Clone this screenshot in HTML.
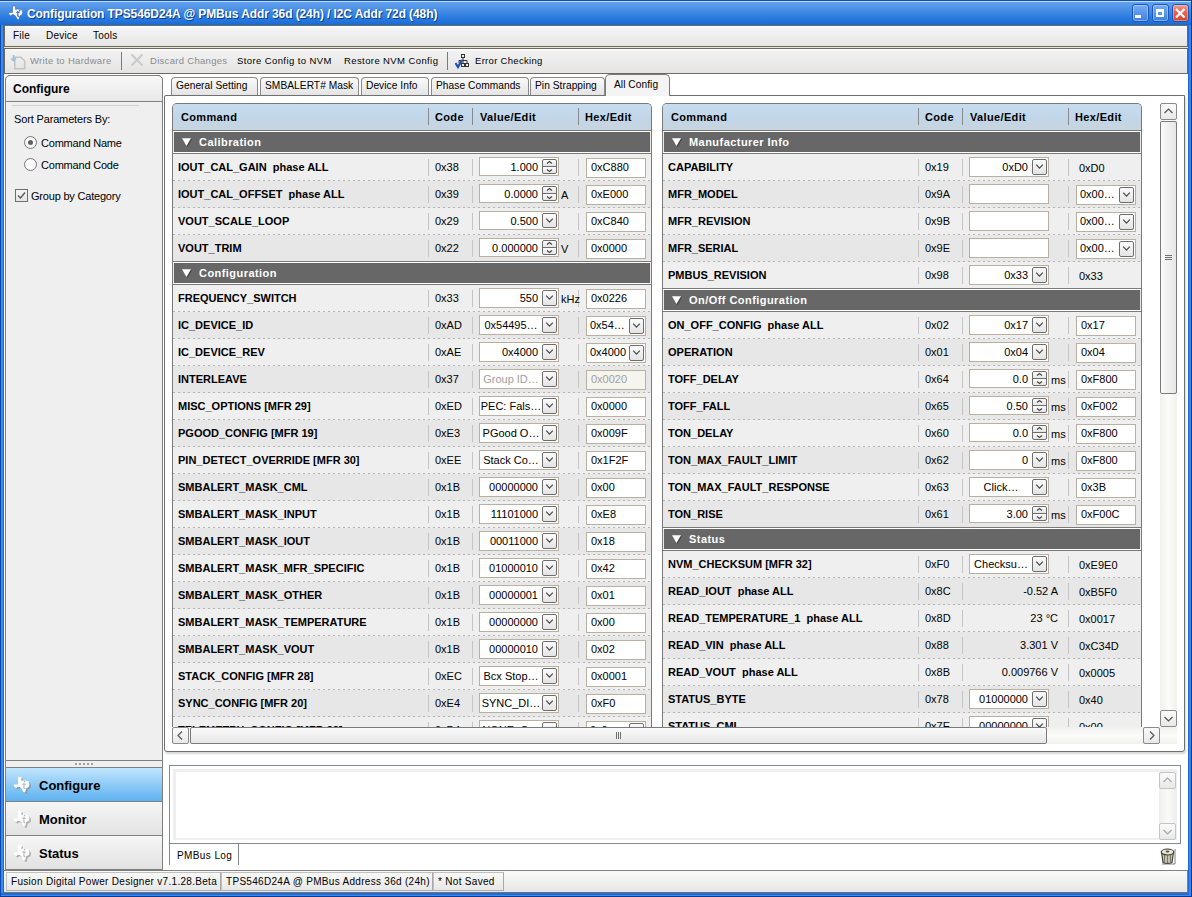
<!DOCTYPE html><html><head><meta charset="utf-8"><style>
html,body{margin:0;padding:0;}
body{width:1192px;height:897px;position:relative;overflow:hidden;font-family:"Liberation Sans",sans-serif;background:#fff;}
div{box-sizing:border-box;}
</style></head><body>
<div style="position:absolute;left:0px;top:0px;width:1192px;height:897px;background:#2068DA;"></div>
<div style="position:absolute;left:0px;top:0px;width:1192px;height:25px;background:linear-gradient(#0A50B0 0px,#0A50B0 1px,#C4DBFA 1px,#C4DBFA 2px,#62A0EC 2px,#5898E8 6px,#3A86E2 13px,#2A7BDF 18px,#1E70DA 23px,#1868D0 25px);"></div>
<div style="position:absolute;left:0px;top:25px;width:1px;height:872px;background:#0B48B0;"></div>
<div style="position:absolute;left:1191px;top:0px;width:1px;height:897px;background:#0B3A90;"></div>
<div style="position:absolute;left:0px;top:896px;width:1192px;height:1px;background:#0B3A90;"></div>
<div style="position:absolute;left:1px;top:25px;width:2px;height:871px;background:#3C8AEC;"></div>
<div style="position:absolute;left:1px;top:893px;width:1190px;height:2px;background:#1F6CDD;"></div>
<div style="position:absolute;left:1px;top:895px;width:1190px;height:1px;background:#3C8AEC;"></div>
<div style="position:absolute;left:1189px;top:25px;width:2px;height:870px;background:#3A84E6;"></div>
<div style="position:absolute;left:4px;top:25px;width:1184px;height:868px;background:#FFFFFF;"></div>
<svg style="position:absolute;left:8px;top:5px" width="16" height="16" viewBox="0 0 16 16"><path d="M4.5 1 H7.5 V4.5 L9.5 4 L13.5 4.5 L14.8 7 L14.2 9.6 L11.8 11 L10.8 14.8 L9.2 14.2 L7.8 11.4 L6 9.8 L4 9.5 L2.8 11 L0.8 9.2 L0.8 7.6 H4.5 Z" fill="#FFFFFF" stroke="#2A5AA8" stroke-width="0.5"/><path d="M9.8 6 V10.5 Q9.8 11.5 11 11.3" stroke="#3A78D8" stroke-width="1.3" fill="none"/><circle cx="11.6" cy="5.6" r="0.9" fill="#3A78D8"/><path d="M8.2 7.4 H11.6" stroke="#3A78D8" stroke-width="1"/></svg>
<div style="position:absolute;top:8px;font-size:12px;line-height:12px;color:#fff;white-space:pre;font-weight:bold;left:27px;text-shadow:1px 1px 0 #0A3A8A;letter-spacing:-0.1px;">Configuration TPS546D24A @ PMBus Addr 36d (24h) / I2C Addr 72d (48h)</div>
<div style="position:absolute;left:1132px;top:4px;width:17px;height:18px;border:1px solid #1B55C0;border-radius:3px;background:linear-gradient(#78ADF2 0%,#5A97EA 50%,#3C80E0 100%);box-shadow:inset 0 0 0 1px rgba(255,255,255,0.35);"></div>
<div style="position:absolute;left:1152px;top:4px;width:17px;height:18px;border:1px solid #1B55C0;border-radius:3px;background:linear-gradient(#78ADF2 0%,#5A97EA 50%,#3C80E0 100%);box-shadow:inset 0 0 0 1px rgba(255,255,255,0.35);"></div>
<div style="position:absolute;left:1172px;top:4px;width:17px;height:18px;border:1px solid #1B55C0;border-radius:3px;background:linear-gradient(#F29A88 0%,#E8604A 50%,#D8402A 100%);box-shadow:inset 0 0 0 1px rgba(255,255,255,0.35);"></div>
<div style="position:absolute;left:1135px;top:15px;width:6px;height:3px;background:#fff;"></div>
<div style="position:absolute;left:1156px;top:9px;width:8px;height:8px;border:2px solid #fff;border-top-width:3px;"></div>
<svg style="position:absolute;left:1172px;top:5px" width="17" height="17" viewBox="0 0 17 17"><path d="M4 4 L12.5 12.5 M12.5 4 L4 12.5" stroke="#fff" stroke-width="2.2"/></svg>
<div style="position:absolute;left:4px;top:25px;width:1184px;height:22px;border:1px solid #6E6A60;border-right-color:#6E6A60;background:linear-gradient(#FFFFFF 0px,#F4F4F4 2px,#E6E6E6 20px);"></div>
<div style="position:absolute;left:4px;top:47px;width:1184px;height:1px;background:#E8E4D8;"></div>
<div style="position:absolute;top:31px;font-size:10px;line-height:10px;color:#000;white-space:pre;left:13px;letter-spacing:0.2px;">File</div>
<div style="position:absolute;top:31px;font-size:10px;line-height:10px;color:#000;white-space:pre;left:46px;letter-spacing:0.2px;">Device</div>
<div style="position:absolute;top:31px;font-size:10px;line-height:10px;color:#000;white-space:pre;left:93px;letter-spacing:0.2px;">Tools</div>
<div style="position:absolute;left:4px;top:48px;width:1184px;height:26px;border:1px solid #6E6A60;background:linear-gradient(#FFFFFF 0px,#F2F2F2 2px,#E4E4E4 24px);"></div>
<div style="position:absolute;left:4px;top:74px;width:160px;height:819px;background:#FFFFFF;"></div>
<div style="position:absolute;left:5px;top:75px;width:158px;height:686px;border:1px solid #808080;border-radius:5px 5px 0 0;background:#EFEFEF;"></div>
<div style="position:absolute;left:5px;top:75px;width:158px;height:27px;border:1px solid #808080;border-radius:5px 5px 0 0;background:linear-gradient(#F8F8F8,#E8E8E8);"></div>
<div style="position:absolute;top:83px;font-size:12px;line-height:12px;color:#000;white-space:pre;font-weight:bold;left:13px;">Configure</div>
<div style="position:absolute;left:12px;top:105px;width:127px;height:1px;background:#D0D0D0;"></div>
<div style="position:absolute;top:114px;font-size:11px;line-height:11px;color:#000;white-space:pre;left:14px;letter-spacing:-0.15px;">Sort Parameters By:</div>
<div style="position:absolute;left:164px;top:95px;width:1021px;height:657px;border:1px solid #707070;border-radius:2px 0 3px 3px;background:#FFFFFF;box-shadow:1px 2px 2px rgba(0,0,0,0.16);"></div>
<svg style="position:absolute;left:10px;top:54px" width="16" height="16" viewBox="0 0 16 16"><path d="M4.8 3.3 H11 L14.7 7 V14.7 H4.8 Z" fill="none" stroke="#C4C4C4" stroke-width="1.6"/><path d="M3.5 1 V6" stroke="#9CC0E0" stroke-width="1.6"/><path d="M1 4.5 L3.5 7.5 L6 4.5" fill="#9CC0E0" stroke="#9CC0E0" stroke-width="1"/></svg>
<div style="position:absolute;top:56px;font-size:9.5px;line-height:9.5px;color:#8A8A8A;white-space:pre;left:30px;letter-spacing:0.3px;">Write to Hardware</div>
<div style="position:absolute;left:121px;top:52px;width:1px;height:18px;background:#7A7A7A;"></div>
<svg style="position:absolute;left:129px;top:52px" width="16" height="16" viewBox="0 0 16 16"><path d="M2.5 2.5 L13.5 13.5 M13.5 2.5 L2.5 13.5" stroke="#C8C8C8" stroke-width="1.8"/></svg>
<div style="position:absolute;top:56px;font-size:9.5px;line-height:9.5px;color:#8A8A8A;white-space:pre;left:150px;letter-spacing:0.3px;">Discard Changes</div>
<div style="position:absolute;top:56px;font-size:9.5px;line-height:9.5px;color:#000;white-space:pre;left:237px;letter-spacing:0.4px;">Store Config to NVM</div>
<div style="position:absolute;top:56px;font-size:9.5px;line-height:9.5px;color:#000;white-space:pre;left:344px;letter-spacing:0.4px;">Restore NVM Config</div>
<div style="position:absolute;left:447px;top:52px;width:1px;height:18px;background:#7A7A7A;"></div>
<svg style="position:absolute;left:455px;top:53px" width="16" height="16" viewBox="0 0 16 16"><rect x="6.5" y="1.5" width="3" height="3" fill="none" stroke="#333" stroke-width="1"/><path d="M8 4.5 V7.5 M4 7.5 H12 M4 7.5 V10 M8 7.5 V10 M12 7.5 V10" stroke="#333" stroke-width="1" fill="none"/><rect x="6.5" y="10.5" width="3" height="3" fill="none" stroke="#333" stroke-width="1"/><rect x="10.5" y="10.5" width="3" height="3" fill="none" stroke="#333" stroke-width="1"/><path d="M0.5 10 L3 14 L7 7" stroke="#1A4FB0" stroke-width="2.2" fill="none"/></svg>
<div style="position:absolute;top:56px;font-size:9.5px;line-height:9.5px;color:#000;white-space:pre;left:475px;letter-spacing:0.3px;">Error Checking</div>
<div style="position:absolute;left:171px;top:77px;width:87px;height:18px;border:1px solid #8A8A8A;border-bottom:none;border-radius:4px 4px 0 0;background:linear-gradient(#FAFAFA,#E4E4E4);"></div>
<div style="position:absolute;top:81px;font-size:10.2px;line-height:10.2px;color:#000;white-space:pre;left:176px;letter-spacing:0.05px;">General Setting</div>
<div style="position:absolute;left:260px;top:77px;width:99px;height:18px;border:1px solid #8A8A8A;border-bottom:none;border-radius:4px 4px 0 0;background:linear-gradient(#FAFAFA,#E4E4E4);"></div>
<div style="position:absolute;top:81px;font-size:10.2px;line-height:10.2px;color:#000;white-space:pre;left:265px;letter-spacing:0.05px;">SMBALERT# Mask</div>
<div style="position:absolute;left:361px;top:77px;width:68px;height:18px;border:1px solid #8A8A8A;border-bottom:none;border-radius:4px 4px 0 0;background:linear-gradient(#FAFAFA,#E4E4E4);"></div>
<div style="position:absolute;top:81px;font-size:10.2px;line-height:10.2px;color:#000;white-space:pre;left:366px;letter-spacing:0.05px;">Device Info</div>
<div style="position:absolute;left:431px;top:77px;width:98px;height:18px;border:1px solid #8A8A8A;border-bottom:none;border-radius:4px 4px 0 0;background:linear-gradient(#FAFAFA,#E4E4E4);"></div>
<div style="position:absolute;top:81px;font-size:10.2px;line-height:10.2px;color:#000;white-space:pre;left:436px;letter-spacing:0.05px;">Phase Commands</div>
<div style="position:absolute;left:530px;top:77px;width:75px;height:18px;border:1px solid #8A8A8A;border-bottom:none;border-radius:4px 4px 0 0;background:linear-gradient(#FAFAFA,#E4E4E4);"></div>
<div style="position:absolute;top:81px;font-size:10.2px;line-height:10.2px;color:#000;white-space:pre;left:535px;letter-spacing:0.05px;">Pin Strapping</div>
<div style="position:absolute;left:605px;top:74px;width:65px;height:22px;border:1px solid #7A7A7A;border-bottom:none;border-radius:5px 5px 0 0;background:#F4F4F4;"></div>
<div style="position:absolute;top:80px;font-size:10.2px;line-height:10.2px;color:#000;white-space:pre;left:614px;letter-spacing:0.05px;">All Config</div>
<div style="position:absolute;left:24px;top:136px;width:13px;height:13px;border-radius:50%;border:1px solid #7A7A7A;background:radial-gradient(#FFFFFF 40%,#E8E8E8);"></div>
<div style="position:absolute;left:28px;top:140px;width:5px;height:5px;border-radius:50%;background:#606060;"></div>
<div style="position:absolute;top:138px;font-size:11px;line-height:11px;color:#000;white-space:pre;left:41px;letter-spacing:-0.2px;">Command Name</div>
<div style="position:absolute;left:24px;top:158px;width:13px;height:13px;border-radius:50%;border:1px solid #7A7A7A;background:radial-gradient(#FFFFFF 40%,#E8E8E8);"></div>
<div style="position:absolute;top:160px;font-size:11px;line-height:11px;color:#000;white-space:pre;left:41px;letter-spacing:-0.2px;">Command Code</div>
<div style="position:absolute;left:15px;top:189px;width:13px;height:13px;border:1px solid #6E6E6E;background:linear-gradient(#F6F6F6,#E4E4E4);"></div>
<svg style="position:absolute;left:15px;top:189px" width="13" height="13"><path d="M3 6.5 L5.5 9 L10 3.5" stroke="#555555" stroke-width="1.3" fill="none"/></svg>
<div style="position:absolute;top:191px;font-size:11px;line-height:11px;color:#000;white-space:pre;left:31px;letter-spacing:-0.2px;">Group by Category</div>
<div style="position:absolute;left:5px;top:760px;width:158px;height:8px;border:1px solid #808080;background:#EFEFEF;"></div>
<div style="position:absolute;left:75px;top:763px;width:2px;height:2px;background:#A0A0A0;"></div>
<div style="position:absolute;left:79px;top:763px;width:2px;height:2px;background:#A0A0A0;"></div>
<div style="position:absolute;left:83px;top:763px;width:2px;height:2px;background:#A0A0A0;"></div>
<div style="position:absolute;left:87px;top:763px;width:2px;height:2px;background:#A0A0A0;"></div>
<div style="position:absolute;left:91px;top:763px;width:2px;height:2px;background:#A0A0A0;"></div>
<div style="position:absolute;left:5px;top:767px;width:158px;height:35px;border:1px solid #808080;background:linear-gradient(#C0E6FC 0px,#9DD2F8 12px,#5EB2F0 33px);"></div>
<svg style="position:absolute;left:12px;top:775px" width="20" height="20" viewBox="0 0 20 20"><path transform="translate(2.5,2.5) scale(1.12)" d="M4.5 1 H7.5 V4.5 L9.5 4 L13.5 4.5 L14.8 7 L14.2 9.6 L11.8 11 L10.8 14.8 L9.2 14.2 L7.8 11.4 L6 9.8 L4 9.5 L2.8 11 L0.8 9.2 L0.8 7.6 H4.5 Z" fill="#777" opacity="0.5"/><path transform="translate(1,1) scale(1.12)" d="M4.5 1 H7.5 V4.5 L9.5 4 L13.5 4.5 L14.8 7 L14.2 9.6 L11.8 11 L10.8 14.8 L9.2 14.2 L7.8 11.4 L6 9.8 L4 9.5 L2.8 11 L0.8 9.2 L0.8 7.6 H4.5 Z" fill="#fff"/><path transform="translate(1,1) scale(1.12)" d="M9.8 6 V10.5 Q9.8 11.5 11 11.3 M8.2 7.4 H11.6" stroke="#B8B8B8" stroke-width="1" fill="none"/><circle cx="12.6" cy="6.6" r="0.8" fill="#B8B8B8"/></svg>
<div style="position:absolute;top:779px;font-size:13px;line-height:13px;color:#000;white-space:pre;font-weight:bold;left:39px;">Configure</div>
<div style="position:absolute;left:5px;top:801px;width:158px;height:35px;border:1px solid #808080;background:linear-gradient(#F6F6F6,#E2E2E2);"></div>
<svg style="position:absolute;left:12px;top:809px" width="20" height="20" viewBox="0 0 20 20"><path transform="translate(2.5,2.5) scale(1.12)" d="M4.5 1 H7.5 V4.5 L9.5 4 L13.5 4.5 L14.8 7 L14.2 9.6 L11.8 11 L10.8 14.8 L9.2 14.2 L7.8 11.4 L6 9.8 L4 9.5 L2.8 11 L0.8 9.2 L0.8 7.6 H4.5 Z" fill="#777" opacity="0.5"/><path transform="translate(1,1) scale(1.12)" d="M4.5 1 H7.5 V4.5 L9.5 4 L13.5 4.5 L14.8 7 L14.2 9.6 L11.8 11 L10.8 14.8 L9.2 14.2 L7.8 11.4 L6 9.8 L4 9.5 L2.8 11 L0.8 9.2 L0.8 7.6 H4.5 Z" fill="#fff"/><path transform="translate(1,1) scale(1.12)" d="M9.8 6 V10.5 Q9.8 11.5 11 11.3 M8.2 7.4 H11.6" stroke="#B8B8B8" stroke-width="1" fill="none"/><circle cx="12.6" cy="6.6" r="0.8" fill="#B8B8B8"/></svg>
<div style="position:absolute;top:813px;font-size:13px;line-height:13px;color:#000;white-space:pre;font-weight:bold;left:39px;">Monitor</div>
<div style="position:absolute;left:5px;top:835px;width:158px;height:35px;border:1px solid #808080;background:linear-gradient(#F6F6F6,#E2E2E2);"></div>
<svg style="position:absolute;left:12px;top:843px" width="20" height="20" viewBox="0 0 20 20"><path transform="translate(2.5,2.5) scale(1.12)" d="M4.5 1 H7.5 V4.5 L9.5 4 L13.5 4.5 L14.8 7 L14.2 9.6 L11.8 11 L10.8 14.8 L9.2 14.2 L7.8 11.4 L6 9.8 L4 9.5 L2.8 11 L0.8 9.2 L0.8 7.6 H4.5 Z" fill="#777" opacity="0.5"/><path transform="translate(1,1) scale(1.12)" d="M4.5 1 H7.5 V4.5 L9.5 4 L13.5 4.5 L14.8 7 L14.2 9.6 L11.8 11 L10.8 14.8 L9.2 14.2 L7.8 11.4 L6 9.8 L4 9.5 L2.8 11 L0.8 9.2 L0.8 7.6 H4.5 Z" fill="#fff"/><path transform="translate(1,1) scale(1.12)" d="M9.8 6 V10.5 Q9.8 11.5 11 11.3 M8.2 7.4 H11.6" stroke="#B8B8B8" stroke-width="1" fill="none"/><circle cx="12.6" cy="6.6" r="0.8" fill="#B8B8B8"/></svg>
<div style="position:absolute;top:847px;font-size:13px;line-height:13px;color:#000;white-space:pre;font-weight:bold;left:39px;">Status</div>
<div style="position:absolute;left:4px;top:870px;width:1184px;height:23px;border-top:1px solid #808080;border-bottom:1px solid #707070;border-right:1px solid #808080;background:linear-gradient(#FAFAF8,#E6E6E6);"></div>
<div style="position:absolute;left:6px;top:872px;width:215px;height:19px;border:1px solid #C0C0C0;border-right-color:#A8A8A8;border-bottom-color:#B0B0B0;"></div>
<div style="position:absolute;top:877px;font-size:10px;line-height:10px;color:#000;white-space:pre;left:11px;letter-spacing:0.3px;">Fusion Digital Power Designer v7.1.28.Beta</div>
<div style="position:absolute;left:221px;top:872px;width:212px;height:19px;border:1px solid #C0C0C0;border-right-color:#A8A8A8;border-bottom-color:#B0B0B0;"></div>
<div style="position:absolute;top:877px;font-size:10px;line-height:10px;color:#000;white-space:pre;left:226px;letter-spacing:0.3px;">TPS546D24A @ PMBus Address 36d (24h)</div>
<div style="position:absolute;left:433px;top:872px;width:71px;height:19px;border:1px solid #C0C0C0;border-right-color:#A8A8A8;border-bottom-color:#B0B0B0;"></div>
<div style="position:absolute;top:877px;font-size:10px;line-height:10px;color:#000;white-space:pre;left:438px;letter-spacing:0.3px;">* Not Saved</div>
<div style="position:absolute;left:0;top:0;width:1192px;height:727px;overflow:hidden;">
<div style="position:absolute;left:172px;top:103px;width:480px;height:640px;border:1px solid #7A7A7A;border-bottom:none;border-radius:5px 5px 0 0;background:#E8E8E8;"></div>
<div style="position:absolute;left:173px;top:104px;width:478px;height:26px;border-radius:4px 4px 0 0;background:linear-gradient(#C6DCEF,#C2D6E8 60%,#C8D4DE);"></div>
<div style="position:absolute;left:173px;top:130px;width:478px;height:1px;background:#7A7A7A;"></div>
<div style="position:absolute;left:428px;top:108px;width:1px;height:17px;background:#8A8A8A;"></div>
<div style="position:absolute;left:472px;top:108px;width:1px;height:17px;background:#8A8A8A;"></div>
<div style="position:absolute;left:578px;top:108px;width:1px;height:17px;background:#8A8A8A;"></div>
<div style="position:absolute;top:112px;font-size:11px;line-height:11px;color:#000;white-space:pre;font-weight:bold;left:181px;letter-spacing:0.35px;">Command</div>
<div style="position:absolute;top:112px;font-size:11px;line-height:11px;color:#000;white-space:pre;font-weight:bold;left:435px;letter-spacing:0.35px;">Code</div>
<div style="position:absolute;top:112px;font-size:11px;line-height:11px;color:#000;white-space:pre;font-weight:bold;left:480px;letter-spacing:0.35px;">Value/Edit</div>
<div style="position:absolute;top:112px;font-size:11px;line-height:11px;color:#000;white-space:pre;font-weight:bold;left:585px;letter-spacing:0.35px;">Hex/Edit</div>
<div style="position:absolute;left:173px;top:131px;width:478px;height:1px;background:#FFFFFF;"></div>
<div style="position:absolute;left:174px;top:132px;width:476px;height:20px;background:#676767;"></div>
<div style="position:absolute;left:173px;top:152px;width:478px;height:1px;background:#FFFFFF;"></div>
<div style="position:absolute;left:173px;top:153px;width:478px;height:1px;background:#7A7A7A;"></div>
<svg style="position:absolute;left:182px;top:138px" width="11" height="10" viewBox="0 0 11 10"><path d="M0 0.2 H9 L4.5 8 Z" fill="#2A2A2A" opacity="0.6" transform="translate(1,1)"/><path d="M0 0.2 H9 L4.5 8 Z" fill="#FFFFFF"/></svg>
<div style="position:absolute;top:137px;font-size:11px;line-height:11px;color:#FFFFFF;white-space:pre;font-weight:bold;left:199px;letter-spacing:0.45px;">Calibration</div>
<div style="position:absolute;left:173px;top:154px;width:478px;height:27px;background:#EFEFEF;"></div>
<div style="position:absolute;left:173px;top:180px;width:478px;height:1px;background-image:linear-gradient(90deg,#B4B4B4 0px,#B4B4B4 2px,transparent 2px,transparent 5px);background-size:5px 1px;"></div>
<div style="position:absolute;left:428px;top:159px;width:1px;height:17px;background:#C4C4C4;"></div>
<div style="position:absolute;left:472px;top:159px;width:1px;height:17px;background:#C4C4C4;"></div>
<div style="position:absolute;left:578px;top:159px;width:1px;height:17px;background:#C4C4C4;"></div>
<div style="position:absolute;top:162px;font-size:11px;line-height:11px;color:#000;white-space:pre;font-weight:bold;left:178px;">IOUT_CAL_GAIN  phase ALL</div>
<div style="position:absolute;top:162px;font-size:11px;line-height:11px;color:#000;white-space:pre;left:435px;">0x38</div>
<div style="position:absolute;left:479px;top:157px;width:80px;height:19px;border:1px solid #BBAFA2;background:#FFFFFF;"></div>
<div style="position:absolute;left:542px;top:159px;width:15px;height:15px;border:1px solid #6E6E6E;border-radius:2px;background:linear-gradient(#FBFBFB,#E6E6E6 45%,#6E6E6E 45%,#6E6E6E 53%,#FBFBFB 53%,#E6E6E6);"></div>
<svg style="position:absolute;left:542px;top:159px" width="15" height="15" viewBox="0 0 15 15"><path d="M5 4.5 L7.5 2.5 L10 4.5 M5 10.5 L7.5 12.5 L10 10.5" stroke="#4A4A4A" stroke-width="1.3" fill="none"/></svg>
<div style="position:absolute;top:162px;font-size:11px;line-height:11px;color:#000;white-space:pre;left:468px;width:70px;text-align:right;">1.000</div>
<div style="position:absolute;left:586px;top:158px;width:60px;height:20px;border:1px solid #BBAFA2;background:#FFFFFF;"></div>
<div style="position:absolute;top:162px;font-size:11px;line-height:11px;color:#000;white-space:pre;left:591px;">0xC880</div>
<div style="position:absolute;left:173px;top:181px;width:478px;height:27px;background:#E7E7E7;"></div>
<div style="position:absolute;left:173px;top:207px;width:478px;height:1px;background-image:linear-gradient(90deg,#B4B4B4 0px,#B4B4B4 2px,transparent 2px,transparent 5px);background-size:5px 1px;"></div>
<div style="position:absolute;left:428px;top:186px;width:1px;height:17px;background:#C4C4C4;"></div>
<div style="position:absolute;left:472px;top:186px;width:1px;height:17px;background:#C4C4C4;"></div>
<div style="position:absolute;left:578px;top:186px;width:1px;height:17px;background:#C4C4C4;"></div>
<div style="position:absolute;top:189px;font-size:11px;line-height:11px;color:#000;white-space:pre;font-weight:bold;left:178px;">IOUT_CAL_OFFSET  phase ALL</div>
<div style="position:absolute;top:189px;font-size:11px;line-height:11px;color:#000;white-space:pre;left:435px;">0x39</div>
<div style="position:absolute;left:479px;top:184px;width:80px;height:19px;border:1px solid #BBAFA2;background:#FFFFFF;"></div>
<div style="position:absolute;left:542px;top:186px;width:15px;height:15px;border:1px solid #6E6E6E;border-radius:2px;background:linear-gradient(#FBFBFB,#E6E6E6 45%,#6E6E6E 45%,#6E6E6E 53%,#FBFBFB 53%,#E6E6E6);"></div>
<svg style="position:absolute;left:542px;top:186px" width="15" height="15" viewBox="0 0 15 15"><path d="M5 4.5 L7.5 2.5 L10 4.5 M5 10.5 L7.5 12.5 L10 10.5" stroke="#4A4A4A" stroke-width="1.3" fill="none"/></svg>
<div style="position:absolute;top:189px;font-size:11px;line-height:11px;color:#000;white-space:pre;left:468px;width:70px;text-align:right;">0.0000</div>
<div style="position:absolute;top:190px;font-size:11px;line-height:11px;color:#000;white-space:pre;left:561px;">A</div>
<div style="position:absolute;left:586px;top:185px;width:60px;height:20px;border:1px solid #BBAFA2;background:#FFFFFF;"></div>
<div style="position:absolute;top:189px;font-size:11px;line-height:11px;color:#000;white-space:pre;left:591px;">0xE000</div>
<div style="position:absolute;left:173px;top:208px;width:478px;height:27px;background:#EFEFEF;"></div>
<div style="position:absolute;left:173px;top:234px;width:478px;height:1px;background-image:linear-gradient(90deg,#B4B4B4 0px,#B4B4B4 2px,transparent 2px,transparent 5px);background-size:5px 1px;"></div>
<div style="position:absolute;left:428px;top:213px;width:1px;height:17px;background:#C4C4C4;"></div>
<div style="position:absolute;left:472px;top:213px;width:1px;height:17px;background:#C4C4C4;"></div>
<div style="position:absolute;left:578px;top:213px;width:1px;height:17px;background:#C4C4C4;"></div>
<div style="position:absolute;top:216px;font-size:11px;line-height:11px;color:#000;white-space:pre;font-weight:bold;left:178px;">VOUT_SCALE_LOOP</div>
<div style="position:absolute;top:216px;font-size:11px;line-height:11px;color:#000;white-space:pre;left:435px;">0x29</div>
<div style="position:absolute;left:479px;top:211px;width:80px;height:19px;border:1px solid #BBAFA2;background:#FFFFFF;"></div>
<div style="position:absolute;left:542px;top:213px;width:15px;height:15px;border:1px solid #6E6E6E;border-radius:2px;background:linear-gradient(#FBFBFB,#E4E4E4);"></div>
<svg style="position:absolute;left:542px;top:213px" width="15" height="15" viewBox="0 0 15 15"><path d="M4.2 5.6 L7.5 9.2 L10.8 5.6" stroke="#4A4A4A" stroke-width="1.25" fill="none"/></svg>
<div style="position:absolute;top:216px;font-size:11px;line-height:11px;color:#000;white-space:pre;left:468px;width:70px;text-align:right;">0.500</div>
<div style="position:absolute;left:586px;top:212px;width:60px;height:20px;border:1px solid #BBAFA2;background:#FFFFFF;"></div>
<div style="position:absolute;top:216px;font-size:11px;line-height:11px;color:#000;white-space:pre;left:591px;">0xC840</div>
<div style="position:absolute;left:173px;top:235px;width:478px;height:27px;background:#E7E7E7;"></div>
<div style="position:absolute;left:173px;top:261px;width:478px;height:1px;background:#7A7A7A;"></div>
<div style="position:absolute;left:428px;top:240px;width:1px;height:17px;background:#C4C4C4;"></div>
<div style="position:absolute;left:472px;top:240px;width:1px;height:17px;background:#C4C4C4;"></div>
<div style="position:absolute;left:578px;top:240px;width:1px;height:17px;background:#C4C4C4;"></div>
<div style="position:absolute;top:243px;font-size:11px;line-height:11px;color:#000;white-space:pre;font-weight:bold;left:178px;">VOUT_TRIM</div>
<div style="position:absolute;top:243px;font-size:11px;line-height:11px;color:#000;white-space:pre;left:435px;">0x22</div>
<div style="position:absolute;left:479px;top:238px;width:80px;height:19px;border:1px solid #BBAFA2;background:#FFFFFF;"></div>
<div style="position:absolute;left:542px;top:240px;width:15px;height:15px;border:1px solid #6E6E6E;border-radius:2px;background:linear-gradient(#FBFBFB,#E6E6E6 45%,#6E6E6E 45%,#6E6E6E 53%,#FBFBFB 53%,#E6E6E6);"></div>
<svg style="position:absolute;left:542px;top:240px" width="15" height="15" viewBox="0 0 15 15"><path d="M5 4.5 L7.5 2.5 L10 4.5 M5 10.5 L7.5 12.5 L10 10.5" stroke="#4A4A4A" stroke-width="1.3" fill="none"/></svg>
<div style="position:absolute;top:243px;font-size:11px;line-height:11px;color:#000;white-space:pre;left:468px;width:70px;text-align:right;">0.000000</div>
<div style="position:absolute;top:244px;font-size:11px;line-height:11px;color:#000;white-space:pre;left:561px;">V</div>
<div style="position:absolute;left:586px;top:239px;width:60px;height:20px;border:1px solid #BBAFA2;background:#FFFFFF;"></div>
<div style="position:absolute;top:243px;font-size:11px;line-height:11px;color:#000;white-space:pre;left:591px;">0x0000</div>
<div style="position:absolute;left:173px;top:262px;width:478px;height:1px;background:#FFFFFF;"></div>
<div style="position:absolute;left:174px;top:263px;width:476px;height:20px;background:#676767;"></div>
<div style="position:absolute;left:173px;top:283px;width:478px;height:1px;background:#FFFFFF;"></div>
<div style="position:absolute;left:173px;top:284px;width:478px;height:1px;background:#7A7A7A;"></div>
<svg style="position:absolute;left:182px;top:269px" width="11" height="10" viewBox="0 0 11 10"><path d="M0 0.2 H9 L4.5 8 Z" fill="#2A2A2A" opacity="0.6" transform="translate(1,1)"/><path d="M0 0.2 H9 L4.5 8 Z" fill="#FFFFFF"/></svg>
<div style="position:absolute;top:268px;font-size:11px;line-height:11px;color:#FFFFFF;white-space:pre;font-weight:bold;left:199px;letter-spacing:0.45px;">Configuration</div>
<div style="position:absolute;left:173px;top:285px;width:478px;height:27px;background:#EFEFEF;"></div>
<div style="position:absolute;left:173px;top:311px;width:478px;height:1px;background-image:linear-gradient(90deg,#B4B4B4 0px,#B4B4B4 2px,transparent 2px,transparent 5px);background-size:5px 1px;"></div>
<div style="position:absolute;left:428px;top:290px;width:1px;height:17px;background:#C4C4C4;"></div>
<div style="position:absolute;left:472px;top:290px;width:1px;height:17px;background:#C4C4C4;"></div>
<div style="position:absolute;left:578px;top:290px;width:1px;height:17px;background:#C4C4C4;"></div>
<div style="position:absolute;top:293px;font-size:11px;line-height:11px;color:#000;white-space:pre;font-weight:bold;left:178px;">FREQUENCY_SWITCH</div>
<div style="position:absolute;top:293px;font-size:11px;line-height:11px;color:#000;white-space:pre;left:435px;">0x33</div>
<div style="position:absolute;left:479px;top:288px;width:80px;height:20px;border:1px solid #BBAFA2;background:#FFFFFF;"></div>
<div style="position:absolute;left:542px;top:290px;width:15px;height:16px;border:1px solid #6E6E6E;border-radius:2px;background:linear-gradient(#FBFBFB,#E4E4E4);"></div>
<svg style="position:absolute;left:542px;top:290px" width="15" height="15" viewBox="0 0 15 15"><path d="M4.2 5.6 L7.5 9.2 L10.8 5.6" stroke="#4A4A4A" stroke-width="1.25" fill="none"/></svg>
<div style="position:absolute;top:293px;font-size:11px;line-height:11px;color:#000;white-space:pre;left:468px;width:70px;text-align:right;">550</div>
<div style="position:absolute;top:294px;font-size:11px;line-height:11px;color:#000;white-space:pre;left:561px;">kHz</div>
<div style="position:absolute;left:586px;top:289px;width:60px;height:20px;border:1px solid #BBAFA2;background:#FFFFFF;"></div>
<div style="position:absolute;top:293px;font-size:11px;line-height:11px;color:#000;white-space:pre;left:591px;">0x0226</div>
<div style="position:absolute;left:173px;top:312px;width:478px;height:27px;background:#E7E7E7;"></div>
<div style="position:absolute;left:173px;top:338px;width:478px;height:1px;background-image:linear-gradient(90deg,#B4B4B4 0px,#B4B4B4 2px,transparent 2px,transparent 5px);background-size:5px 1px;"></div>
<div style="position:absolute;left:428px;top:317px;width:1px;height:17px;background:#C4C4C4;"></div>
<div style="position:absolute;left:472px;top:317px;width:1px;height:17px;background:#C4C4C4;"></div>
<div style="position:absolute;left:578px;top:317px;width:1px;height:17px;background:#C4C4C4;"></div>
<div style="position:absolute;top:320px;font-size:11px;line-height:11px;color:#000;white-space:pre;font-weight:bold;left:178px;">IC_DEVICE_ID</div>
<div style="position:absolute;top:320px;font-size:11px;line-height:11px;color:#000;white-space:pre;left:435px;">0xAD</div>
<div style="position:absolute;left:479px;top:315px;width:80px;height:20px;border:1px solid #BBAFA2;background:#FFFFFF;"></div>
<div style="position:absolute;left:542px;top:317px;width:15px;height:16px;border:1px solid #6E6E6E;border-radius:2px;background:linear-gradient(#FBFBFB,#E4E4E4);"></div>
<svg style="position:absolute;left:542px;top:317px" width="15" height="15" viewBox="0 0 15 15"><path d="M4.2 5.6 L7.5 9.2 L10.8 5.6" stroke="#4A4A4A" stroke-width="1.25" fill="none"/></svg>
<div style="position:absolute;top:320px;font-size:11px;line-height:11px;color:#000;white-space:pre;left:480px;width:62px;text-align:center;">0x54495…</div>
<div style="position:absolute;left:586px;top:316px;width:60px;height:20px;border:1px solid #BBAFA2;background:#FFFFFF;"></div>
<div style="position:absolute;left:629px;top:318px;width:15px;height:16px;border:1px solid #6E6E6E;border-radius:2px;background:linear-gradient(#FBFBFB,#E4E4E4);"></div>
<svg style="position:absolute;left:629px;top:318px" width="15" height="15" viewBox="0 0 15 15"><path d="M4.2 5.6 L7.5 9.2 L10.8 5.6" stroke="#4A4A4A" stroke-width="1.25" fill="none"/></svg>
<div style="position:absolute;top:320px;font-size:11px;line-height:11px;color:#000;white-space:pre;left:590px;">0x54…</div>
<div style="position:absolute;left:173px;top:339px;width:478px;height:27px;background:#EFEFEF;"></div>
<div style="position:absolute;left:173px;top:365px;width:478px;height:1px;background-image:linear-gradient(90deg,#B4B4B4 0px,#B4B4B4 2px,transparent 2px,transparent 5px);background-size:5px 1px;"></div>
<div style="position:absolute;left:428px;top:344px;width:1px;height:17px;background:#C4C4C4;"></div>
<div style="position:absolute;left:472px;top:344px;width:1px;height:17px;background:#C4C4C4;"></div>
<div style="position:absolute;left:578px;top:344px;width:1px;height:17px;background:#C4C4C4;"></div>
<div style="position:absolute;top:347px;font-size:11px;line-height:11px;color:#000;white-space:pre;font-weight:bold;left:178px;">IC_DEVICE_REV</div>
<div style="position:absolute;top:347px;font-size:11px;line-height:11px;color:#000;white-space:pre;left:435px;">0xAE</div>
<div style="position:absolute;left:479px;top:342px;width:80px;height:20px;border:1px solid #BBAFA2;background:#FFFFFF;"></div>
<div style="position:absolute;left:542px;top:344px;width:15px;height:16px;border:1px solid #6E6E6E;border-radius:2px;background:linear-gradient(#FBFBFB,#E4E4E4);"></div>
<svg style="position:absolute;left:542px;top:344px" width="15" height="15" viewBox="0 0 15 15"><path d="M4.2 5.6 L7.5 9.2 L10.8 5.6" stroke="#4A4A4A" stroke-width="1.25" fill="none"/></svg>
<div style="position:absolute;top:347px;font-size:11px;line-height:11px;color:#000;white-space:pre;left:468px;width:70px;text-align:right;">0x4000</div>
<div style="position:absolute;left:586px;top:343px;width:60px;height:20px;border:1px solid #BBAFA2;background:#FFFFFF;"></div>
<div style="position:absolute;left:629px;top:345px;width:15px;height:16px;border:1px solid #6E6E6E;border-radius:2px;background:linear-gradient(#FBFBFB,#E4E4E4);"></div>
<svg style="position:absolute;left:629px;top:345px" width="15" height="15" viewBox="0 0 15 15"><path d="M4.2 5.6 L7.5 9.2 L10.8 5.6" stroke="#4A4A4A" stroke-width="1.25" fill="none"/></svg>
<div style="position:absolute;top:347px;font-size:11px;line-height:11px;color:#000;white-space:pre;left:590px;">0x4000</div>
<div style="position:absolute;left:173px;top:366px;width:478px;height:27px;background:#E7E7E7;"></div>
<div style="position:absolute;left:173px;top:392px;width:478px;height:1px;background-image:linear-gradient(90deg,#B4B4B4 0px,#B4B4B4 2px,transparent 2px,transparent 5px);background-size:5px 1px;"></div>
<div style="position:absolute;left:428px;top:371px;width:1px;height:17px;background:#C4C4C4;"></div>
<div style="position:absolute;left:472px;top:371px;width:1px;height:17px;background:#C4C4C4;"></div>
<div style="position:absolute;left:578px;top:371px;width:1px;height:17px;background:#C4C4C4;"></div>
<div style="position:absolute;top:374px;font-size:11px;line-height:11px;color:#000;white-space:pre;font-weight:bold;left:178px;">INTERLEAVE</div>
<div style="position:absolute;top:374px;font-size:11px;line-height:11px;color:#000;white-space:pre;left:435px;">0x37</div>
<div style="position:absolute;left:479px;top:369px;width:80px;height:20px;border:1px solid #BBAFA2;background:#FFFFFF;"></div>
<div style="position:absolute;left:542px;top:371px;width:15px;height:16px;border:1px solid #6E6E6E;border-radius:2px;background:linear-gradient(#FBFBFB,#E4E4E4);"></div>
<svg style="position:absolute;left:542px;top:371px" width="15" height="15" viewBox="0 0 15 15"><path d="M4.2 5.6 L7.5 9.2 L10.8 5.6" stroke="#4A4A4A" stroke-width="1.25" fill="none"/></svg>
<div style="position:absolute;top:374px;font-size:11px;line-height:11px;color:#A0A0A0;white-space:pre;left:480px;width:62px;text-align:center;">Group ID…</div>
<div style="position:absolute;left:586px;top:370px;width:60px;height:20px;border:1px solid #BBAFA2;background:#F5F4EE;"></div>
<div style="position:absolute;top:374px;font-size:11px;line-height:11px;color:#A0A0A0;white-space:pre;left:591px;">0x0020</div>
<div style="position:absolute;left:173px;top:393px;width:478px;height:27px;background:#EFEFEF;"></div>
<div style="position:absolute;left:173px;top:419px;width:478px;height:1px;background-image:linear-gradient(90deg,#B4B4B4 0px,#B4B4B4 2px,transparent 2px,transparent 5px);background-size:5px 1px;"></div>
<div style="position:absolute;left:428px;top:398px;width:1px;height:17px;background:#C4C4C4;"></div>
<div style="position:absolute;left:472px;top:398px;width:1px;height:17px;background:#C4C4C4;"></div>
<div style="position:absolute;left:578px;top:398px;width:1px;height:17px;background:#C4C4C4;"></div>
<div style="position:absolute;top:401px;font-size:11px;line-height:11px;color:#000;white-space:pre;font-weight:bold;left:178px;">MISC_OPTIONS [MFR 29]</div>
<div style="position:absolute;top:401px;font-size:11px;line-height:11px;color:#000;white-space:pre;left:435px;">0xED</div>
<div style="position:absolute;left:479px;top:396px;width:80px;height:20px;border:1px solid #BBAFA2;background:#FFFFFF;"></div>
<div style="position:absolute;left:542px;top:398px;width:15px;height:16px;border:1px solid #6E6E6E;border-radius:2px;background:linear-gradient(#FBFBFB,#E4E4E4);"></div>
<svg style="position:absolute;left:542px;top:398px" width="15" height="15" viewBox="0 0 15 15"><path d="M4.2 5.6 L7.5 9.2 L10.8 5.6" stroke="#4A4A4A" stroke-width="1.25" fill="none"/></svg>
<div style="position:absolute;top:401px;font-size:11px;line-height:11px;color:#000;white-space:pre;left:480px;width:62px;text-align:center;">PEC: Fals…</div>
<div style="position:absolute;left:586px;top:397px;width:60px;height:20px;border:1px solid #BBAFA2;background:#FFFFFF;"></div>
<div style="position:absolute;top:401px;font-size:11px;line-height:11px;color:#000;white-space:pre;left:591px;">0x0000</div>
<div style="position:absolute;left:173px;top:420px;width:478px;height:27px;background:#E7E7E7;"></div>
<div style="position:absolute;left:173px;top:446px;width:478px;height:1px;background-image:linear-gradient(90deg,#B4B4B4 0px,#B4B4B4 2px,transparent 2px,transparent 5px);background-size:5px 1px;"></div>
<div style="position:absolute;left:428px;top:425px;width:1px;height:17px;background:#C4C4C4;"></div>
<div style="position:absolute;left:472px;top:425px;width:1px;height:17px;background:#C4C4C4;"></div>
<div style="position:absolute;left:578px;top:425px;width:1px;height:17px;background:#C4C4C4;"></div>
<div style="position:absolute;top:428px;font-size:11px;line-height:11px;color:#000;white-space:pre;font-weight:bold;left:178px;">PGOOD_CONFIG [MFR 19]</div>
<div style="position:absolute;top:428px;font-size:11px;line-height:11px;color:#000;white-space:pre;left:435px;">0xE3</div>
<div style="position:absolute;left:479px;top:423px;width:80px;height:20px;border:1px solid #BBAFA2;background:#FFFFFF;"></div>
<div style="position:absolute;left:542px;top:425px;width:15px;height:16px;border:1px solid #6E6E6E;border-radius:2px;background:linear-gradient(#FBFBFB,#E4E4E4);"></div>
<svg style="position:absolute;left:542px;top:425px" width="15" height="15" viewBox="0 0 15 15"><path d="M4.2 5.6 L7.5 9.2 L10.8 5.6" stroke="#4A4A4A" stroke-width="1.25" fill="none"/></svg>
<div style="position:absolute;top:428px;font-size:11px;line-height:11px;color:#000;white-space:pre;left:480px;width:62px;text-align:center;">PGood O…</div>
<div style="position:absolute;left:586px;top:424px;width:60px;height:20px;border:1px solid #BBAFA2;background:#FFFFFF;"></div>
<div style="position:absolute;top:428px;font-size:11px;line-height:11px;color:#000;white-space:pre;left:591px;">0x009F</div>
<div style="position:absolute;left:173px;top:447px;width:478px;height:27px;background:#EFEFEF;"></div>
<div style="position:absolute;left:173px;top:473px;width:478px;height:1px;background-image:linear-gradient(90deg,#B4B4B4 0px,#B4B4B4 2px,transparent 2px,transparent 5px);background-size:5px 1px;"></div>
<div style="position:absolute;left:428px;top:452px;width:1px;height:17px;background:#C4C4C4;"></div>
<div style="position:absolute;left:472px;top:452px;width:1px;height:17px;background:#C4C4C4;"></div>
<div style="position:absolute;left:578px;top:452px;width:1px;height:17px;background:#C4C4C4;"></div>
<div style="position:absolute;top:455px;font-size:11px;line-height:11px;color:#000;white-space:pre;font-weight:bold;left:178px;">PIN_DETECT_OVERRIDE [MFR 30]</div>
<div style="position:absolute;top:455px;font-size:11px;line-height:11px;color:#000;white-space:pre;left:435px;">0xEE</div>
<div style="position:absolute;left:479px;top:450px;width:80px;height:20px;border:1px solid #BBAFA2;background:#FFFFFF;"></div>
<div style="position:absolute;left:542px;top:452px;width:15px;height:16px;border:1px solid #6E6E6E;border-radius:2px;background:linear-gradient(#FBFBFB,#E4E4E4);"></div>
<svg style="position:absolute;left:542px;top:452px" width="15" height="15" viewBox="0 0 15 15"><path d="M4.2 5.6 L7.5 9.2 L10.8 5.6" stroke="#4A4A4A" stroke-width="1.25" fill="none"/></svg>
<div style="position:absolute;top:455px;font-size:11px;line-height:11px;color:#000;white-space:pre;left:480px;width:62px;text-align:center;">Stack Co…</div>
<div style="position:absolute;left:586px;top:451px;width:60px;height:20px;border:1px solid #BBAFA2;background:#FFFFFF;"></div>
<div style="position:absolute;top:455px;font-size:11px;line-height:11px;color:#000;white-space:pre;left:591px;">0x1F2F</div>
<div style="position:absolute;left:173px;top:474px;width:478px;height:27px;background:#E7E7E7;"></div>
<div style="position:absolute;left:173px;top:500px;width:478px;height:1px;background-image:linear-gradient(90deg,#B4B4B4 0px,#B4B4B4 2px,transparent 2px,transparent 5px);background-size:5px 1px;"></div>
<div style="position:absolute;left:428px;top:479px;width:1px;height:17px;background:#C4C4C4;"></div>
<div style="position:absolute;left:472px;top:479px;width:1px;height:17px;background:#C4C4C4;"></div>
<div style="position:absolute;left:578px;top:479px;width:1px;height:17px;background:#C4C4C4;"></div>
<div style="position:absolute;top:482px;font-size:11px;line-height:11px;color:#000;white-space:pre;font-weight:bold;left:178px;">SMBALERT_MASK_CML</div>
<div style="position:absolute;top:482px;font-size:11px;line-height:11px;color:#000;white-space:pre;left:435px;">0x1B</div>
<div style="position:absolute;left:479px;top:477px;width:80px;height:20px;border:1px solid #BBAFA2;background:#FFFFFF;"></div>
<div style="position:absolute;left:542px;top:479px;width:15px;height:16px;border:1px solid #6E6E6E;border-radius:2px;background:linear-gradient(#FBFBFB,#E4E4E4);"></div>
<svg style="position:absolute;left:542px;top:479px" width="15" height="15" viewBox="0 0 15 15"><path d="M4.2 5.6 L7.5 9.2 L10.8 5.6" stroke="#4A4A4A" stroke-width="1.25" fill="none"/></svg>
<div style="position:absolute;top:482px;font-size:11px;line-height:11px;color:#000;white-space:pre;left:468px;width:70px;text-align:right;">00000000</div>
<div style="position:absolute;left:586px;top:478px;width:60px;height:20px;border:1px solid #BBAFA2;background:#FFFFFF;"></div>
<div style="position:absolute;top:482px;font-size:11px;line-height:11px;color:#000;white-space:pre;left:591px;">0x00</div>
<div style="position:absolute;left:173px;top:501px;width:478px;height:27px;background:#EFEFEF;"></div>
<div style="position:absolute;left:173px;top:527px;width:478px;height:1px;background-image:linear-gradient(90deg,#B4B4B4 0px,#B4B4B4 2px,transparent 2px,transparent 5px);background-size:5px 1px;"></div>
<div style="position:absolute;left:428px;top:506px;width:1px;height:17px;background:#C4C4C4;"></div>
<div style="position:absolute;left:472px;top:506px;width:1px;height:17px;background:#C4C4C4;"></div>
<div style="position:absolute;left:578px;top:506px;width:1px;height:17px;background:#C4C4C4;"></div>
<div style="position:absolute;top:509px;font-size:11px;line-height:11px;color:#000;white-space:pre;font-weight:bold;left:178px;">SMBALERT_MASK_INPUT</div>
<div style="position:absolute;top:509px;font-size:11px;line-height:11px;color:#000;white-space:pre;left:435px;">0x1B</div>
<div style="position:absolute;left:479px;top:504px;width:80px;height:20px;border:1px solid #BBAFA2;background:#FFFFFF;"></div>
<div style="position:absolute;left:542px;top:506px;width:15px;height:16px;border:1px solid #6E6E6E;border-radius:2px;background:linear-gradient(#FBFBFB,#E4E4E4);"></div>
<svg style="position:absolute;left:542px;top:506px" width="15" height="15" viewBox="0 0 15 15"><path d="M4.2 5.6 L7.5 9.2 L10.8 5.6" stroke="#4A4A4A" stroke-width="1.25" fill="none"/></svg>
<div style="position:absolute;top:509px;font-size:11px;line-height:11px;color:#000;white-space:pre;left:468px;width:70px;text-align:right;">11101000</div>
<div style="position:absolute;left:586px;top:505px;width:60px;height:20px;border:1px solid #BBAFA2;background:#FFFFFF;"></div>
<div style="position:absolute;top:509px;font-size:11px;line-height:11px;color:#000;white-space:pre;left:591px;">0xE8</div>
<div style="position:absolute;left:173px;top:528px;width:478px;height:27px;background:#E7E7E7;"></div>
<div style="position:absolute;left:173px;top:554px;width:478px;height:1px;background-image:linear-gradient(90deg,#B4B4B4 0px,#B4B4B4 2px,transparent 2px,transparent 5px);background-size:5px 1px;"></div>
<div style="position:absolute;left:428px;top:533px;width:1px;height:17px;background:#C4C4C4;"></div>
<div style="position:absolute;left:472px;top:533px;width:1px;height:17px;background:#C4C4C4;"></div>
<div style="position:absolute;left:578px;top:533px;width:1px;height:17px;background:#C4C4C4;"></div>
<div style="position:absolute;top:536px;font-size:11px;line-height:11px;color:#000;white-space:pre;font-weight:bold;left:178px;">SMBALERT_MASK_IOUT</div>
<div style="position:absolute;top:536px;font-size:11px;line-height:11px;color:#000;white-space:pre;left:435px;">0x1B</div>
<div style="position:absolute;left:479px;top:531px;width:80px;height:20px;border:1px solid #BBAFA2;background:#FFFFFF;"></div>
<div style="position:absolute;left:542px;top:533px;width:15px;height:16px;border:1px solid #6E6E6E;border-radius:2px;background:linear-gradient(#FBFBFB,#E4E4E4);"></div>
<svg style="position:absolute;left:542px;top:533px" width="15" height="15" viewBox="0 0 15 15"><path d="M4.2 5.6 L7.5 9.2 L10.8 5.6" stroke="#4A4A4A" stroke-width="1.25" fill="none"/></svg>
<div style="position:absolute;top:536px;font-size:11px;line-height:11px;color:#000;white-space:pre;left:468px;width:70px;text-align:right;">00011000</div>
<div style="position:absolute;left:586px;top:532px;width:60px;height:20px;border:1px solid #BBAFA2;background:#FFFFFF;"></div>
<div style="position:absolute;top:536px;font-size:11px;line-height:11px;color:#000;white-space:pre;left:591px;">0x18</div>
<div style="position:absolute;left:173px;top:555px;width:478px;height:27px;background:#EFEFEF;"></div>
<div style="position:absolute;left:173px;top:581px;width:478px;height:1px;background-image:linear-gradient(90deg,#B4B4B4 0px,#B4B4B4 2px,transparent 2px,transparent 5px);background-size:5px 1px;"></div>
<div style="position:absolute;left:428px;top:560px;width:1px;height:17px;background:#C4C4C4;"></div>
<div style="position:absolute;left:472px;top:560px;width:1px;height:17px;background:#C4C4C4;"></div>
<div style="position:absolute;left:578px;top:560px;width:1px;height:17px;background:#C4C4C4;"></div>
<div style="position:absolute;top:563px;font-size:11px;line-height:11px;color:#000;white-space:pre;font-weight:bold;left:178px;">SMBALERT_MASK_MFR_SPECIFIC</div>
<div style="position:absolute;top:563px;font-size:11px;line-height:11px;color:#000;white-space:pre;left:435px;">0x1B</div>
<div style="position:absolute;left:479px;top:558px;width:80px;height:20px;border:1px solid #BBAFA2;background:#FFFFFF;"></div>
<div style="position:absolute;left:542px;top:560px;width:15px;height:16px;border:1px solid #6E6E6E;border-radius:2px;background:linear-gradient(#FBFBFB,#E4E4E4);"></div>
<svg style="position:absolute;left:542px;top:560px" width="15" height="15" viewBox="0 0 15 15"><path d="M4.2 5.6 L7.5 9.2 L10.8 5.6" stroke="#4A4A4A" stroke-width="1.25" fill="none"/></svg>
<div style="position:absolute;top:563px;font-size:11px;line-height:11px;color:#000;white-space:pre;left:468px;width:70px;text-align:right;">01000010</div>
<div style="position:absolute;left:586px;top:559px;width:60px;height:20px;border:1px solid #BBAFA2;background:#FFFFFF;"></div>
<div style="position:absolute;top:563px;font-size:11px;line-height:11px;color:#000;white-space:pre;left:591px;">0x42</div>
<div style="position:absolute;left:173px;top:582px;width:478px;height:27px;background:#E7E7E7;"></div>
<div style="position:absolute;left:173px;top:608px;width:478px;height:1px;background-image:linear-gradient(90deg,#B4B4B4 0px,#B4B4B4 2px,transparent 2px,transparent 5px);background-size:5px 1px;"></div>
<div style="position:absolute;left:428px;top:587px;width:1px;height:17px;background:#C4C4C4;"></div>
<div style="position:absolute;left:472px;top:587px;width:1px;height:17px;background:#C4C4C4;"></div>
<div style="position:absolute;left:578px;top:587px;width:1px;height:17px;background:#C4C4C4;"></div>
<div style="position:absolute;top:590px;font-size:11px;line-height:11px;color:#000;white-space:pre;font-weight:bold;left:178px;">SMBALERT_MASK_OTHER</div>
<div style="position:absolute;top:590px;font-size:11px;line-height:11px;color:#000;white-space:pre;left:435px;">0x1B</div>
<div style="position:absolute;left:479px;top:585px;width:80px;height:20px;border:1px solid #BBAFA2;background:#FFFFFF;"></div>
<div style="position:absolute;left:542px;top:587px;width:15px;height:16px;border:1px solid #6E6E6E;border-radius:2px;background:linear-gradient(#FBFBFB,#E4E4E4);"></div>
<svg style="position:absolute;left:542px;top:587px" width="15" height="15" viewBox="0 0 15 15"><path d="M4.2 5.6 L7.5 9.2 L10.8 5.6" stroke="#4A4A4A" stroke-width="1.25" fill="none"/></svg>
<div style="position:absolute;top:590px;font-size:11px;line-height:11px;color:#000;white-space:pre;left:468px;width:70px;text-align:right;">00000001</div>
<div style="position:absolute;left:586px;top:586px;width:60px;height:20px;border:1px solid #BBAFA2;background:#FFFFFF;"></div>
<div style="position:absolute;top:590px;font-size:11px;line-height:11px;color:#000;white-space:pre;left:591px;">0x01</div>
<div style="position:absolute;left:173px;top:609px;width:478px;height:27px;background:#EFEFEF;"></div>
<div style="position:absolute;left:173px;top:635px;width:478px;height:1px;background-image:linear-gradient(90deg,#B4B4B4 0px,#B4B4B4 2px,transparent 2px,transparent 5px);background-size:5px 1px;"></div>
<div style="position:absolute;left:428px;top:614px;width:1px;height:17px;background:#C4C4C4;"></div>
<div style="position:absolute;left:472px;top:614px;width:1px;height:17px;background:#C4C4C4;"></div>
<div style="position:absolute;left:578px;top:614px;width:1px;height:17px;background:#C4C4C4;"></div>
<div style="position:absolute;top:617px;font-size:11px;line-height:11px;color:#000;white-space:pre;font-weight:bold;left:178px;">SMBALERT_MASK_TEMPERATURE</div>
<div style="position:absolute;top:617px;font-size:11px;line-height:11px;color:#000;white-space:pre;left:435px;">0x1B</div>
<div style="position:absolute;left:479px;top:612px;width:80px;height:20px;border:1px solid #BBAFA2;background:#FFFFFF;"></div>
<div style="position:absolute;left:542px;top:614px;width:15px;height:16px;border:1px solid #6E6E6E;border-radius:2px;background:linear-gradient(#FBFBFB,#E4E4E4);"></div>
<svg style="position:absolute;left:542px;top:614px" width="15" height="15" viewBox="0 0 15 15"><path d="M4.2 5.6 L7.5 9.2 L10.8 5.6" stroke="#4A4A4A" stroke-width="1.25" fill="none"/></svg>
<div style="position:absolute;top:617px;font-size:11px;line-height:11px;color:#000;white-space:pre;left:468px;width:70px;text-align:right;">00000000</div>
<div style="position:absolute;left:586px;top:613px;width:60px;height:20px;border:1px solid #BBAFA2;background:#FFFFFF;"></div>
<div style="position:absolute;top:617px;font-size:11px;line-height:11px;color:#000;white-space:pre;left:591px;">0x00</div>
<div style="position:absolute;left:173px;top:636px;width:478px;height:27px;background:#E7E7E7;"></div>
<div style="position:absolute;left:173px;top:662px;width:478px;height:1px;background-image:linear-gradient(90deg,#B4B4B4 0px,#B4B4B4 2px,transparent 2px,transparent 5px);background-size:5px 1px;"></div>
<div style="position:absolute;left:428px;top:641px;width:1px;height:17px;background:#C4C4C4;"></div>
<div style="position:absolute;left:472px;top:641px;width:1px;height:17px;background:#C4C4C4;"></div>
<div style="position:absolute;left:578px;top:641px;width:1px;height:17px;background:#C4C4C4;"></div>
<div style="position:absolute;top:644px;font-size:11px;line-height:11px;color:#000;white-space:pre;font-weight:bold;left:178px;">SMBALERT_MASK_VOUT</div>
<div style="position:absolute;top:644px;font-size:11px;line-height:11px;color:#000;white-space:pre;left:435px;">0x1B</div>
<div style="position:absolute;left:479px;top:639px;width:80px;height:20px;border:1px solid #BBAFA2;background:#FFFFFF;"></div>
<div style="position:absolute;left:542px;top:641px;width:15px;height:16px;border:1px solid #6E6E6E;border-radius:2px;background:linear-gradient(#FBFBFB,#E4E4E4);"></div>
<svg style="position:absolute;left:542px;top:641px" width="15" height="15" viewBox="0 0 15 15"><path d="M4.2 5.6 L7.5 9.2 L10.8 5.6" stroke="#4A4A4A" stroke-width="1.25" fill="none"/></svg>
<div style="position:absolute;top:644px;font-size:11px;line-height:11px;color:#000;white-space:pre;left:468px;width:70px;text-align:right;">00000010</div>
<div style="position:absolute;left:586px;top:640px;width:60px;height:20px;border:1px solid #BBAFA2;background:#FFFFFF;"></div>
<div style="position:absolute;top:644px;font-size:11px;line-height:11px;color:#000;white-space:pre;left:591px;">0x02</div>
<div style="position:absolute;left:173px;top:663px;width:478px;height:27px;background:#EFEFEF;"></div>
<div style="position:absolute;left:173px;top:689px;width:478px;height:1px;background-image:linear-gradient(90deg,#B4B4B4 0px,#B4B4B4 2px,transparent 2px,transparent 5px);background-size:5px 1px;"></div>
<div style="position:absolute;left:428px;top:668px;width:1px;height:17px;background:#C4C4C4;"></div>
<div style="position:absolute;left:472px;top:668px;width:1px;height:17px;background:#C4C4C4;"></div>
<div style="position:absolute;left:578px;top:668px;width:1px;height:17px;background:#C4C4C4;"></div>
<div style="position:absolute;top:671px;font-size:11px;line-height:11px;color:#000;white-space:pre;font-weight:bold;left:178px;">STACK_CONFIG [MFR 28]</div>
<div style="position:absolute;top:671px;font-size:11px;line-height:11px;color:#000;white-space:pre;left:435px;">0xEC</div>
<div style="position:absolute;left:479px;top:666px;width:80px;height:20px;border:1px solid #BBAFA2;background:#FFFFFF;"></div>
<div style="position:absolute;left:542px;top:668px;width:15px;height:16px;border:1px solid #6E6E6E;border-radius:2px;background:linear-gradient(#FBFBFB,#E4E4E4);"></div>
<svg style="position:absolute;left:542px;top:668px" width="15" height="15" viewBox="0 0 15 15"><path d="M4.2 5.6 L7.5 9.2 L10.8 5.6" stroke="#4A4A4A" stroke-width="1.25" fill="none"/></svg>
<div style="position:absolute;top:671px;font-size:11px;line-height:11px;color:#000;white-space:pre;left:480px;width:62px;text-align:center;">Bcx Stop…</div>
<div style="position:absolute;left:586px;top:667px;width:60px;height:20px;border:1px solid #BBAFA2;background:#FFFFFF;"></div>
<div style="position:absolute;top:671px;font-size:11px;line-height:11px;color:#000;white-space:pre;left:591px;">0x0001</div>
<div style="position:absolute;left:173px;top:690px;width:478px;height:27px;background:#E7E7E7;"></div>
<div style="position:absolute;left:173px;top:716px;width:478px;height:1px;background-image:linear-gradient(90deg,#B4B4B4 0px,#B4B4B4 2px,transparent 2px,transparent 5px);background-size:5px 1px;"></div>
<div style="position:absolute;left:428px;top:695px;width:1px;height:17px;background:#C4C4C4;"></div>
<div style="position:absolute;left:472px;top:695px;width:1px;height:17px;background:#C4C4C4;"></div>
<div style="position:absolute;left:578px;top:695px;width:1px;height:17px;background:#C4C4C4;"></div>
<div style="position:absolute;top:698px;font-size:11px;line-height:11px;color:#000;white-space:pre;font-weight:bold;left:178px;">SYNC_CONFIG [MFR 20]</div>
<div style="position:absolute;top:698px;font-size:11px;line-height:11px;color:#000;white-space:pre;left:435px;">0xE4</div>
<div style="position:absolute;left:479px;top:693px;width:80px;height:20px;border:1px solid #BBAFA2;background:#FFFFFF;"></div>
<div style="position:absolute;left:542px;top:695px;width:15px;height:16px;border:1px solid #6E6E6E;border-radius:2px;background:linear-gradient(#FBFBFB,#E4E4E4);"></div>
<svg style="position:absolute;left:542px;top:695px" width="15" height="15" viewBox="0 0 15 15"><path d="M4.2 5.6 L7.5 9.2 L10.8 5.6" stroke="#4A4A4A" stroke-width="1.25" fill="none"/></svg>
<div style="position:absolute;top:698px;font-size:11px;line-height:11px;color:#000;white-space:pre;left:480px;width:62px;text-align:center;">SYNC_DI…</div>
<div style="position:absolute;left:586px;top:694px;width:60px;height:20px;border:1px solid #BBAFA2;background:#FFFFFF;"></div>
<div style="position:absolute;top:698px;font-size:11px;line-height:11px;color:#000;white-space:pre;left:591px;">0xF0</div>
<div style="position:absolute;left:173px;top:717px;width:478px;height:27px;background:#EFEFEF;"></div>
<div style="position:absolute;left:173px;top:743px;width:478px;height:1px;background-image:linear-gradient(90deg,#B4B4B4 0px,#B4B4B4 2px,transparent 2px,transparent 5px);background-size:5px 1px;"></div>
<div style="position:absolute;left:428px;top:722px;width:1px;height:17px;background:#C4C4C4;"></div>
<div style="position:absolute;left:472px;top:722px;width:1px;height:17px;background:#C4C4C4;"></div>
<div style="position:absolute;left:578px;top:722px;width:1px;height:17px;background:#C4C4C4;"></div>
<div style="position:absolute;top:725px;font-size:11px;line-height:11px;color:#000;white-space:pre;font-weight:bold;left:178px;">TELEMETRY_CONFIG [MFR 22]</div>
<div style="position:absolute;top:725px;font-size:11px;line-height:11px;color:#000;white-space:pre;left:435px;">0xDA</div>
<div style="position:absolute;left:479px;top:720px;width:80px;height:20px;border:1px solid #BBAFA2;background:#FFFFFF;"></div>
<div style="position:absolute;left:542px;top:722px;width:15px;height:16px;border:1px solid #6E6E6E;border-radius:2px;background:linear-gradient(#FBFBFB,#E4E4E4);"></div>
<svg style="position:absolute;left:542px;top:722px" width="15" height="15" viewBox="0 0 15 15"><path d="M4.2 5.6 L7.5 9.2 L10.8 5.6" stroke="#4A4A4A" stroke-width="1.25" fill="none"/></svg>
<div style="position:absolute;top:725px;font-size:11px;line-height:11px;color:#000;white-space:pre;left:480px;width:62px;text-align:center;">NONE: O…</div>
<div style="position:absolute;left:586px;top:721px;width:60px;height:20px;border:1px solid #BBAFA2;background:#FFFFFF;"></div>
<div style="position:absolute;left:629px;top:723px;width:15px;height:16px;border:1px solid #6E6E6E;border-radius:2px;background:linear-gradient(#FBFBFB,#E4E4E4);"></div>
<svg style="position:absolute;left:629px;top:723px" width="15" height="15" viewBox="0 0 15 15"><path d="M4.2 5.6 L7.5 9.2 L10.8 5.6" stroke="#4A4A4A" stroke-width="1.25" fill="none"/></svg>
<div style="position:absolute;top:725px;font-size:11px;line-height:11px;color:#000;white-space:pre;left:590px;">0x0…</div>
<div style="position:absolute;left:662px;top:103px;width:480px;height:640px;border:1px solid #7A7A7A;border-bottom:none;border-radius:5px 5px 0 0;background:#E8E8E8;"></div>
<div style="position:absolute;left:663px;top:104px;width:478px;height:26px;border-radius:4px 4px 0 0;background:linear-gradient(#C6DCEF,#C2D6E8 60%,#C8D4DE);"></div>
<div style="position:absolute;left:663px;top:130px;width:478px;height:1px;background:#7A7A7A;"></div>
<div style="position:absolute;left:918px;top:108px;width:1px;height:17px;background:#8A8A8A;"></div>
<div style="position:absolute;left:962px;top:108px;width:1px;height:17px;background:#8A8A8A;"></div>
<div style="position:absolute;left:1068px;top:108px;width:1px;height:17px;background:#8A8A8A;"></div>
<div style="position:absolute;top:112px;font-size:11px;line-height:11px;color:#000;white-space:pre;font-weight:bold;left:671px;letter-spacing:0.35px;">Command</div>
<div style="position:absolute;top:112px;font-size:11px;line-height:11px;color:#000;white-space:pre;font-weight:bold;left:925px;letter-spacing:0.35px;">Code</div>
<div style="position:absolute;top:112px;font-size:11px;line-height:11px;color:#000;white-space:pre;font-weight:bold;left:970px;letter-spacing:0.35px;">Value/Edit</div>
<div style="position:absolute;top:112px;font-size:11px;line-height:11px;color:#000;white-space:pre;font-weight:bold;left:1075px;letter-spacing:0.35px;">Hex/Edit</div>
<div style="position:absolute;left:663px;top:131px;width:478px;height:1px;background:#FFFFFF;"></div>
<div style="position:absolute;left:664px;top:132px;width:476px;height:20px;background:#676767;"></div>
<div style="position:absolute;left:663px;top:152px;width:478px;height:1px;background:#FFFFFF;"></div>
<div style="position:absolute;left:663px;top:153px;width:478px;height:1px;background:#7A7A7A;"></div>
<svg style="position:absolute;left:672px;top:138px" width="11" height="10" viewBox="0 0 11 10"><path d="M0 0.2 H9 L4.5 8 Z" fill="#2A2A2A" opacity="0.6" transform="translate(1,1)"/><path d="M0 0.2 H9 L4.5 8 Z" fill="#FFFFFF"/></svg>
<div style="position:absolute;top:137px;font-size:11px;line-height:11px;color:#FFFFFF;white-space:pre;font-weight:bold;left:689px;letter-spacing:0.45px;">Manufacturer Info</div>
<div style="position:absolute;left:663px;top:154px;width:478px;height:27px;background:#EFEFEF;"></div>
<div style="position:absolute;left:663px;top:180px;width:478px;height:1px;background-image:linear-gradient(90deg,#B4B4B4 0px,#B4B4B4 2px,transparent 2px,transparent 5px);background-size:5px 1px;"></div>
<div style="position:absolute;left:918px;top:159px;width:1px;height:17px;background:#C4C4C4;"></div>
<div style="position:absolute;left:962px;top:159px;width:1px;height:17px;background:#C4C4C4;"></div>
<div style="position:absolute;left:1068px;top:159px;width:1px;height:17px;background:#C4C4C4;"></div>
<div style="position:absolute;top:162px;font-size:11px;line-height:11px;color:#000;white-space:pre;font-weight:bold;left:668px;">CAPABILITY</div>
<div style="position:absolute;top:162px;font-size:11px;line-height:11px;color:#000;white-space:pre;left:925px;">0x19</div>
<div style="position:absolute;left:969px;top:157px;width:80px;height:20px;border:1px solid #BBAFA2;background:#FFFFFF;"></div>
<div style="position:absolute;left:1032px;top:159px;width:15px;height:16px;border:1px solid #6E6E6E;border-radius:2px;background:linear-gradient(#FBFBFB,#E4E4E4);"></div>
<svg style="position:absolute;left:1032px;top:159px" width="15" height="15" viewBox="0 0 15 15"><path d="M4.2 5.6 L7.5 9.2 L10.8 5.6" stroke="#4A4A4A" stroke-width="1.25" fill="none"/></svg>
<div style="position:absolute;top:162px;font-size:11px;line-height:11px;color:#000;white-space:pre;left:958px;width:70px;text-align:right;">0xD0</div>
<div style="position:absolute;top:163px;font-size:11px;line-height:11px;color:#000;white-space:pre;left:1079px;">0xD0</div>
<div style="position:absolute;left:663px;top:181px;width:478px;height:27px;background:#E7E7E7;"></div>
<div style="position:absolute;left:663px;top:207px;width:478px;height:1px;background-image:linear-gradient(90deg,#B4B4B4 0px,#B4B4B4 2px,transparent 2px,transparent 5px);background-size:5px 1px;"></div>
<div style="position:absolute;left:918px;top:186px;width:1px;height:17px;background:#C4C4C4;"></div>
<div style="position:absolute;left:962px;top:186px;width:1px;height:17px;background:#C4C4C4;"></div>
<div style="position:absolute;left:1068px;top:186px;width:1px;height:17px;background:#C4C4C4;"></div>
<div style="position:absolute;top:189px;font-size:11px;line-height:11px;color:#000;white-space:pre;font-weight:bold;left:668px;">MFR_MODEL</div>
<div style="position:absolute;top:189px;font-size:11px;line-height:11px;color:#000;white-space:pre;left:925px;">0x9A</div>
<div style="position:absolute;left:969px;top:184px;width:80px;height:20px;border:1px solid #BBAFA2;background:#FFFFFF;"></div>
<div style="position:absolute;left:1076px;top:185px;width:60px;height:20px;border:1px solid #BBAFA2;background:#FFFFFF;"></div>
<div style="position:absolute;left:1119px;top:187px;width:15px;height:16px;border:1px solid #6E6E6E;border-radius:2px;background:linear-gradient(#FBFBFB,#E4E4E4);"></div>
<svg style="position:absolute;left:1119px;top:187px" width="15" height="15" viewBox="0 0 15 15"><path d="M4.2 5.6 L7.5 9.2 L10.8 5.6" stroke="#4A4A4A" stroke-width="1.25" fill="none"/></svg>
<div style="position:absolute;top:189px;font-size:11px;line-height:11px;color:#000;white-space:pre;left:1080px;">0x00…</div>
<div style="position:absolute;left:663px;top:208px;width:478px;height:27px;background:#EFEFEF;"></div>
<div style="position:absolute;left:663px;top:234px;width:478px;height:1px;background-image:linear-gradient(90deg,#B4B4B4 0px,#B4B4B4 2px,transparent 2px,transparent 5px);background-size:5px 1px;"></div>
<div style="position:absolute;left:918px;top:213px;width:1px;height:17px;background:#C4C4C4;"></div>
<div style="position:absolute;left:962px;top:213px;width:1px;height:17px;background:#C4C4C4;"></div>
<div style="position:absolute;left:1068px;top:213px;width:1px;height:17px;background:#C4C4C4;"></div>
<div style="position:absolute;top:216px;font-size:11px;line-height:11px;color:#000;white-space:pre;font-weight:bold;left:668px;">MFR_REVISION</div>
<div style="position:absolute;top:216px;font-size:11px;line-height:11px;color:#000;white-space:pre;left:925px;">0x9B</div>
<div style="position:absolute;left:969px;top:211px;width:80px;height:20px;border:1px solid #BBAFA2;background:#FFFFFF;"></div>
<div style="position:absolute;left:1076px;top:212px;width:60px;height:20px;border:1px solid #BBAFA2;background:#FFFFFF;"></div>
<div style="position:absolute;left:1119px;top:214px;width:15px;height:16px;border:1px solid #6E6E6E;border-radius:2px;background:linear-gradient(#FBFBFB,#E4E4E4);"></div>
<svg style="position:absolute;left:1119px;top:214px" width="15" height="15" viewBox="0 0 15 15"><path d="M4.2 5.6 L7.5 9.2 L10.8 5.6" stroke="#4A4A4A" stroke-width="1.25" fill="none"/></svg>
<div style="position:absolute;top:216px;font-size:11px;line-height:11px;color:#000;white-space:pre;left:1080px;">0x00…</div>
<div style="position:absolute;left:663px;top:235px;width:478px;height:27px;background:#E7E7E7;"></div>
<div style="position:absolute;left:663px;top:261px;width:478px;height:1px;background-image:linear-gradient(90deg,#B4B4B4 0px,#B4B4B4 2px,transparent 2px,transparent 5px);background-size:5px 1px;"></div>
<div style="position:absolute;left:918px;top:240px;width:1px;height:17px;background:#C4C4C4;"></div>
<div style="position:absolute;left:962px;top:240px;width:1px;height:17px;background:#C4C4C4;"></div>
<div style="position:absolute;left:1068px;top:240px;width:1px;height:17px;background:#C4C4C4;"></div>
<div style="position:absolute;top:243px;font-size:11px;line-height:11px;color:#000;white-space:pre;font-weight:bold;left:668px;">MFR_SERIAL</div>
<div style="position:absolute;top:243px;font-size:11px;line-height:11px;color:#000;white-space:pre;left:925px;">0x9E</div>
<div style="position:absolute;left:969px;top:238px;width:80px;height:20px;border:1px solid #BBAFA2;background:#FFFFFF;"></div>
<div style="position:absolute;left:1076px;top:239px;width:60px;height:20px;border:1px solid #BBAFA2;background:#FFFFFF;"></div>
<div style="position:absolute;left:1119px;top:241px;width:15px;height:16px;border:1px solid #6E6E6E;border-radius:2px;background:linear-gradient(#FBFBFB,#E4E4E4);"></div>
<svg style="position:absolute;left:1119px;top:241px" width="15" height="15" viewBox="0 0 15 15"><path d="M4.2 5.6 L7.5 9.2 L10.8 5.6" stroke="#4A4A4A" stroke-width="1.25" fill="none"/></svg>
<div style="position:absolute;top:243px;font-size:11px;line-height:11px;color:#000;white-space:pre;left:1080px;">0x00…</div>
<div style="position:absolute;left:663px;top:262px;width:478px;height:27px;background:#EFEFEF;"></div>
<div style="position:absolute;left:663px;top:288px;width:478px;height:1px;background:#7A7A7A;"></div>
<div style="position:absolute;left:918px;top:267px;width:1px;height:17px;background:#C4C4C4;"></div>
<div style="position:absolute;left:962px;top:267px;width:1px;height:17px;background:#C4C4C4;"></div>
<div style="position:absolute;left:1068px;top:267px;width:1px;height:17px;background:#C4C4C4;"></div>
<div style="position:absolute;top:270px;font-size:11px;line-height:11px;color:#000;white-space:pre;font-weight:bold;left:668px;">PMBUS_REVISION</div>
<div style="position:absolute;top:270px;font-size:11px;line-height:11px;color:#000;white-space:pre;left:925px;">0x98</div>
<div style="position:absolute;left:969px;top:265px;width:80px;height:20px;border:1px solid #BBAFA2;background:#FFFFFF;"></div>
<div style="position:absolute;left:1032px;top:267px;width:15px;height:16px;border:1px solid #6E6E6E;border-radius:2px;background:linear-gradient(#FBFBFB,#E4E4E4);"></div>
<svg style="position:absolute;left:1032px;top:267px" width="15" height="15" viewBox="0 0 15 15"><path d="M4.2 5.6 L7.5 9.2 L10.8 5.6" stroke="#4A4A4A" stroke-width="1.25" fill="none"/></svg>
<div style="position:absolute;top:270px;font-size:11px;line-height:11px;color:#000;white-space:pre;left:958px;width:70px;text-align:right;">0x33</div>
<div style="position:absolute;top:271px;font-size:11px;line-height:11px;color:#000;white-space:pre;left:1079px;">0x33</div>
<div style="position:absolute;left:663px;top:289px;width:478px;height:1px;background:#FFFFFF;"></div>
<div style="position:absolute;left:664px;top:290px;width:476px;height:20px;background:#676767;"></div>
<div style="position:absolute;left:663px;top:310px;width:478px;height:1px;background:#FFFFFF;"></div>
<div style="position:absolute;left:663px;top:311px;width:478px;height:1px;background:#7A7A7A;"></div>
<svg style="position:absolute;left:672px;top:296px" width="11" height="10" viewBox="0 0 11 10"><path d="M0 0.2 H9 L4.5 8 Z" fill="#2A2A2A" opacity="0.6" transform="translate(1,1)"/><path d="M0 0.2 H9 L4.5 8 Z" fill="#FFFFFF"/></svg>
<div style="position:absolute;top:295px;font-size:11px;line-height:11px;color:#FFFFFF;white-space:pre;font-weight:bold;left:689px;letter-spacing:0.45px;">On/Off Configuration</div>
<div style="position:absolute;left:663px;top:312px;width:478px;height:27px;background:#EFEFEF;"></div>
<div style="position:absolute;left:663px;top:338px;width:478px;height:1px;background-image:linear-gradient(90deg,#B4B4B4 0px,#B4B4B4 2px,transparent 2px,transparent 5px);background-size:5px 1px;"></div>
<div style="position:absolute;left:918px;top:317px;width:1px;height:17px;background:#C4C4C4;"></div>
<div style="position:absolute;left:962px;top:317px;width:1px;height:17px;background:#C4C4C4;"></div>
<div style="position:absolute;left:1068px;top:317px;width:1px;height:17px;background:#C4C4C4;"></div>
<div style="position:absolute;top:320px;font-size:11px;line-height:11px;color:#000;white-space:pre;font-weight:bold;left:668px;">ON_OFF_CONFIG  phase ALL</div>
<div style="position:absolute;top:320px;font-size:11px;line-height:11px;color:#000;white-space:pre;left:925px;">0x02</div>
<div style="position:absolute;left:969px;top:315px;width:80px;height:20px;border:1px solid #BBAFA2;background:#FFFFFF;"></div>
<div style="position:absolute;left:1032px;top:317px;width:15px;height:16px;border:1px solid #6E6E6E;border-radius:2px;background:linear-gradient(#FBFBFB,#E4E4E4);"></div>
<svg style="position:absolute;left:1032px;top:317px" width="15" height="15" viewBox="0 0 15 15"><path d="M4.2 5.6 L7.5 9.2 L10.8 5.6" stroke="#4A4A4A" stroke-width="1.25" fill="none"/></svg>
<div style="position:absolute;top:320px;font-size:11px;line-height:11px;color:#000;white-space:pre;left:958px;width:70px;text-align:right;">0x17</div>
<div style="position:absolute;left:1076px;top:316px;width:60px;height:20px;border:1px solid #BBAFA2;background:#FFFFFF;"></div>
<div style="position:absolute;top:320px;font-size:11px;line-height:11px;color:#000;white-space:pre;left:1081px;">0x17</div>
<div style="position:absolute;left:663px;top:339px;width:478px;height:27px;background:#E7E7E7;"></div>
<div style="position:absolute;left:663px;top:365px;width:478px;height:1px;background-image:linear-gradient(90deg,#B4B4B4 0px,#B4B4B4 2px,transparent 2px,transparent 5px);background-size:5px 1px;"></div>
<div style="position:absolute;left:918px;top:344px;width:1px;height:17px;background:#C4C4C4;"></div>
<div style="position:absolute;left:962px;top:344px;width:1px;height:17px;background:#C4C4C4;"></div>
<div style="position:absolute;left:1068px;top:344px;width:1px;height:17px;background:#C4C4C4;"></div>
<div style="position:absolute;top:347px;font-size:11px;line-height:11px;color:#000;white-space:pre;font-weight:bold;left:668px;">OPERATION</div>
<div style="position:absolute;top:347px;font-size:11px;line-height:11px;color:#000;white-space:pre;left:925px;">0x01</div>
<div style="position:absolute;left:969px;top:342px;width:80px;height:20px;border:1px solid #BBAFA2;background:#FFFFFF;"></div>
<div style="position:absolute;left:1032px;top:344px;width:15px;height:16px;border:1px solid #6E6E6E;border-radius:2px;background:linear-gradient(#FBFBFB,#E4E4E4);"></div>
<svg style="position:absolute;left:1032px;top:344px" width="15" height="15" viewBox="0 0 15 15"><path d="M4.2 5.6 L7.5 9.2 L10.8 5.6" stroke="#4A4A4A" stroke-width="1.25" fill="none"/></svg>
<div style="position:absolute;top:347px;font-size:11px;line-height:11px;color:#000;white-space:pre;left:958px;width:70px;text-align:right;">0x04</div>
<div style="position:absolute;left:1076px;top:343px;width:60px;height:20px;border:1px solid #BBAFA2;background:#FFFFFF;"></div>
<div style="position:absolute;top:347px;font-size:11px;line-height:11px;color:#000;white-space:pre;left:1081px;">0x04</div>
<div style="position:absolute;left:663px;top:366px;width:478px;height:27px;background:#EFEFEF;"></div>
<div style="position:absolute;left:663px;top:392px;width:478px;height:1px;background-image:linear-gradient(90deg,#B4B4B4 0px,#B4B4B4 2px,transparent 2px,transparent 5px);background-size:5px 1px;"></div>
<div style="position:absolute;left:918px;top:371px;width:1px;height:17px;background:#C4C4C4;"></div>
<div style="position:absolute;left:962px;top:371px;width:1px;height:17px;background:#C4C4C4;"></div>
<div style="position:absolute;left:1068px;top:371px;width:1px;height:17px;background:#C4C4C4;"></div>
<div style="position:absolute;top:374px;font-size:11px;line-height:11px;color:#000;white-space:pre;font-weight:bold;left:668px;">TOFF_DELAY</div>
<div style="position:absolute;top:374px;font-size:11px;line-height:11px;color:#000;white-space:pre;left:925px;">0x64</div>
<div style="position:absolute;left:969px;top:369px;width:80px;height:19px;border:1px solid #BBAFA2;background:#FFFFFF;"></div>
<div style="position:absolute;left:1032px;top:371px;width:15px;height:15px;border:1px solid #6E6E6E;border-radius:2px;background:linear-gradient(#FBFBFB,#E6E6E6 45%,#6E6E6E 45%,#6E6E6E 53%,#FBFBFB 53%,#E6E6E6);"></div>
<svg style="position:absolute;left:1032px;top:371px" width="15" height="15" viewBox="0 0 15 15"><path d="M5 4.5 L7.5 2.5 L10 4.5 M5 10.5 L7.5 12.5 L10 10.5" stroke="#4A4A4A" stroke-width="1.3" fill="none"/></svg>
<div style="position:absolute;top:374px;font-size:11px;line-height:11px;color:#000;white-space:pre;left:958px;width:70px;text-align:right;">0.0</div>
<div style="position:absolute;top:375px;font-size:11px;line-height:11px;color:#000;white-space:pre;left:1051px;">ms</div>
<div style="position:absolute;left:1076px;top:370px;width:60px;height:20px;border:1px solid #BBAFA2;background:#FFFFFF;"></div>
<div style="position:absolute;top:374px;font-size:11px;line-height:11px;color:#000;white-space:pre;left:1081px;">0xF800</div>
<div style="position:absolute;left:663px;top:393px;width:478px;height:27px;background:#E7E7E7;"></div>
<div style="position:absolute;left:663px;top:419px;width:478px;height:1px;background-image:linear-gradient(90deg,#B4B4B4 0px,#B4B4B4 2px,transparent 2px,transparent 5px);background-size:5px 1px;"></div>
<div style="position:absolute;left:918px;top:398px;width:1px;height:17px;background:#C4C4C4;"></div>
<div style="position:absolute;left:962px;top:398px;width:1px;height:17px;background:#C4C4C4;"></div>
<div style="position:absolute;left:1068px;top:398px;width:1px;height:17px;background:#C4C4C4;"></div>
<div style="position:absolute;top:401px;font-size:11px;line-height:11px;color:#000;white-space:pre;font-weight:bold;left:668px;">TOFF_FALL</div>
<div style="position:absolute;top:401px;font-size:11px;line-height:11px;color:#000;white-space:pre;left:925px;">0x65</div>
<div style="position:absolute;left:969px;top:396px;width:80px;height:19px;border:1px solid #BBAFA2;background:#FFFFFF;"></div>
<div style="position:absolute;left:1032px;top:398px;width:15px;height:15px;border:1px solid #6E6E6E;border-radius:2px;background:linear-gradient(#FBFBFB,#E6E6E6 45%,#6E6E6E 45%,#6E6E6E 53%,#FBFBFB 53%,#E6E6E6);"></div>
<svg style="position:absolute;left:1032px;top:398px" width="15" height="15" viewBox="0 0 15 15"><path d="M5 4.5 L7.5 2.5 L10 4.5 M5 10.5 L7.5 12.5 L10 10.5" stroke="#4A4A4A" stroke-width="1.3" fill="none"/></svg>
<div style="position:absolute;top:401px;font-size:11px;line-height:11px;color:#000;white-space:pre;left:958px;width:70px;text-align:right;">0.50</div>
<div style="position:absolute;top:402px;font-size:11px;line-height:11px;color:#000;white-space:pre;left:1051px;">ms</div>
<div style="position:absolute;left:1076px;top:397px;width:60px;height:20px;border:1px solid #BBAFA2;background:#FFFFFF;"></div>
<div style="position:absolute;top:401px;font-size:11px;line-height:11px;color:#000;white-space:pre;left:1081px;">0xF002</div>
<div style="position:absolute;left:663px;top:420px;width:478px;height:27px;background:#EFEFEF;"></div>
<div style="position:absolute;left:663px;top:446px;width:478px;height:1px;background-image:linear-gradient(90deg,#B4B4B4 0px,#B4B4B4 2px,transparent 2px,transparent 5px);background-size:5px 1px;"></div>
<div style="position:absolute;left:918px;top:425px;width:1px;height:17px;background:#C4C4C4;"></div>
<div style="position:absolute;left:962px;top:425px;width:1px;height:17px;background:#C4C4C4;"></div>
<div style="position:absolute;left:1068px;top:425px;width:1px;height:17px;background:#C4C4C4;"></div>
<div style="position:absolute;top:428px;font-size:11px;line-height:11px;color:#000;white-space:pre;font-weight:bold;left:668px;">TON_DELAY</div>
<div style="position:absolute;top:428px;font-size:11px;line-height:11px;color:#000;white-space:pre;left:925px;">0x60</div>
<div style="position:absolute;left:969px;top:423px;width:80px;height:19px;border:1px solid #BBAFA2;background:#FFFFFF;"></div>
<div style="position:absolute;left:1032px;top:425px;width:15px;height:15px;border:1px solid #6E6E6E;border-radius:2px;background:linear-gradient(#FBFBFB,#E6E6E6 45%,#6E6E6E 45%,#6E6E6E 53%,#FBFBFB 53%,#E6E6E6);"></div>
<svg style="position:absolute;left:1032px;top:425px" width="15" height="15" viewBox="0 0 15 15"><path d="M5 4.5 L7.5 2.5 L10 4.5 M5 10.5 L7.5 12.5 L10 10.5" stroke="#4A4A4A" stroke-width="1.3" fill="none"/></svg>
<div style="position:absolute;top:428px;font-size:11px;line-height:11px;color:#000;white-space:pre;left:958px;width:70px;text-align:right;">0.0</div>
<div style="position:absolute;top:429px;font-size:11px;line-height:11px;color:#000;white-space:pre;left:1051px;">ms</div>
<div style="position:absolute;left:1076px;top:424px;width:60px;height:20px;border:1px solid #BBAFA2;background:#FFFFFF;"></div>
<div style="position:absolute;top:428px;font-size:11px;line-height:11px;color:#000;white-space:pre;left:1081px;">0xF800</div>
<div style="position:absolute;left:663px;top:447px;width:478px;height:27px;background:#E7E7E7;"></div>
<div style="position:absolute;left:663px;top:473px;width:478px;height:1px;background-image:linear-gradient(90deg,#B4B4B4 0px,#B4B4B4 2px,transparent 2px,transparent 5px);background-size:5px 1px;"></div>
<div style="position:absolute;left:918px;top:452px;width:1px;height:17px;background:#C4C4C4;"></div>
<div style="position:absolute;left:962px;top:452px;width:1px;height:17px;background:#C4C4C4;"></div>
<div style="position:absolute;left:1068px;top:452px;width:1px;height:17px;background:#C4C4C4;"></div>
<div style="position:absolute;top:455px;font-size:11px;line-height:11px;color:#000;white-space:pre;font-weight:bold;left:668px;">TON_MAX_FAULT_LIMIT</div>
<div style="position:absolute;top:455px;font-size:11px;line-height:11px;color:#000;white-space:pre;left:925px;">0x62</div>
<div style="position:absolute;left:969px;top:450px;width:80px;height:20px;border:1px solid #BBAFA2;background:#FFFFFF;"></div>
<div style="position:absolute;left:1032px;top:452px;width:15px;height:16px;border:1px solid #6E6E6E;border-radius:2px;background:linear-gradient(#FBFBFB,#E4E4E4);"></div>
<svg style="position:absolute;left:1032px;top:452px" width="15" height="15" viewBox="0 0 15 15"><path d="M4.2 5.6 L7.5 9.2 L10.8 5.6" stroke="#4A4A4A" stroke-width="1.25" fill="none"/></svg>
<div style="position:absolute;top:455px;font-size:11px;line-height:11px;color:#000;white-space:pre;left:958px;width:70px;text-align:right;">0</div>
<div style="position:absolute;top:456px;font-size:11px;line-height:11px;color:#000;white-space:pre;left:1051px;">ms</div>
<div style="position:absolute;left:1076px;top:451px;width:60px;height:20px;border:1px solid #BBAFA2;background:#FFFFFF;"></div>
<div style="position:absolute;top:455px;font-size:11px;line-height:11px;color:#000;white-space:pre;left:1081px;">0xF800</div>
<div style="position:absolute;left:663px;top:474px;width:478px;height:27px;background:#EFEFEF;"></div>
<div style="position:absolute;left:663px;top:500px;width:478px;height:1px;background-image:linear-gradient(90deg,#B4B4B4 0px,#B4B4B4 2px,transparent 2px,transparent 5px);background-size:5px 1px;"></div>
<div style="position:absolute;left:918px;top:479px;width:1px;height:17px;background:#C4C4C4;"></div>
<div style="position:absolute;left:962px;top:479px;width:1px;height:17px;background:#C4C4C4;"></div>
<div style="position:absolute;left:1068px;top:479px;width:1px;height:17px;background:#C4C4C4;"></div>
<div style="position:absolute;top:482px;font-size:11px;line-height:11px;color:#000;white-space:pre;font-weight:bold;left:668px;">TON_MAX_FAULT_RESPONSE</div>
<div style="position:absolute;top:482px;font-size:11px;line-height:11px;color:#000;white-space:pre;left:925px;">0x63</div>
<div style="position:absolute;left:969px;top:477px;width:80px;height:20px;border:1px solid #BBAFA2;background:#FFFFFF;"></div>
<div style="position:absolute;left:1032px;top:479px;width:15px;height:16px;border:1px solid #6E6E6E;border-radius:2px;background:linear-gradient(#FBFBFB,#E4E4E4);"></div>
<svg style="position:absolute;left:1032px;top:479px" width="15" height="15" viewBox="0 0 15 15"><path d="M4.2 5.6 L7.5 9.2 L10.8 5.6" stroke="#4A4A4A" stroke-width="1.25" fill="none"/></svg>
<div style="position:absolute;top:482px;font-size:11px;line-height:11px;color:#000;white-space:pre;left:970px;width:62px;text-align:center;">Click…</div>
<div style="position:absolute;left:1076px;top:478px;width:60px;height:20px;border:1px solid #BBAFA2;background:#FFFFFF;"></div>
<div style="position:absolute;top:482px;font-size:11px;line-height:11px;color:#000;white-space:pre;left:1081px;">0x3B</div>
<div style="position:absolute;left:663px;top:501px;width:478px;height:27px;background:#E7E7E7;"></div>
<div style="position:absolute;left:663px;top:527px;width:478px;height:1px;background:#7A7A7A;"></div>
<div style="position:absolute;left:918px;top:506px;width:1px;height:17px;background:#C4C4C4;"></div>
<div style="position:absolute;left:962px;top:506px;width:1px;height:17px;background:#C4C4C4;"></div>
<div style="position:absolute;left:1068px;top:506px;width:1px;height:17px;background:#C4C4C4;"></div>
<div style="position:absolute;top:509px;font-size:11px;line-height:11px;color:#000;white-space:pre;font-weight:bold;left:668px;">TON_RISE</div>
<div style="position:absolute;top:509px;font-size:11px;line-height:11px;color:#000;white-space:pre;left:925px;">0x61</div>
<div style="position:absolute;left:969px;top:504px;width:80px;height:19px;border:1px solid #BBAFA2;background:#FFFFFF;"></div>
<div style="position:absolute;left:1032px;top:506px;width:15px;height:15px;border:1px solid #6E6E6E;border-radius:2px;background:linear-gradient(#FBFBFB,#E6E6E6 45%,#6E6E6E 45%,#6E6E6E 53%,#FBFBFB 53%,#E6E6E6);"></div>
<svg style="position:absolute;left:1032px;top:506px" width="15" height="15" viewBox="0 0 15 15"><path d="M5 4.5 L7.5 2.5 L10 4.5 M5 10.5 L7.5 12.5 L10 10.5" stroke="#4A4A4A" stroke-width="1.3" fill="none"/></svg>
<div style="position:absolute;top:509px;font-size:11px;line-height:11px;color:#000;white-space:pre;left:958px;width:70px;text-align:right;">3.00</div>
<div style="position:absolute;top:510px;font-size:11px;line-height:11px;color:#000;white-space:pre;left:1051px;">ms</div>
<div style="position:absolute;left:1076px;top:505px;width:60px;height:20px;border:1px solid #BBAFA2;background:#FFFFFF;"></div>
<div style="position:absolute;top:509px;font-size:11px;line-height:11px;color:#000;white-space:pre;left:1081px;">0xF00C</div>
<div style="position:absolute;left:663px;top:528px;width:478px;height:1px;background:#FFFFFF;"></div>
<div style="position:absolute;left:664px;top:529px;width:476px;height:20px;background:#676767;"></div>
<div style="position:absolute;left:663px;top:549px;width:478px;height:1px;background:#FFFFFF;"></div>
<div style="position:absolute;left:663px;top:550px;width:478px;height:1px;background:#7A7A7A;"></div>
<svg style="position:absolute;left:672px;top:535px" width="11" height="10" viewBox="0 0 11 10"><path d="M0 0.2 H9 L4.5 8 Z" fill="#2A2A2A" opacity="0.6" transform="translate(1,1)"/><path d="M0 0.2 H9 L4.5 8 Z" fill="#FFFFFF"/></svg>
<div style="position:absolute;top:534px;font-size:11px;line-height:11px;color:#FFFFFF;white-space:pre;font-weight:bold;left:689px;letter-spacing:0.45px;">Status</div>
<div style="position:absolute;left:663px;top:551px;width:478px;height:27px;background:#EFEFEF;"></div>
<div style="position:absolute;left:663px;top:577px;width:478px;height:1px;background-image:linear-gradient(90deg,#B4B4B4 0px,#B4B4B4 2px,transparent 2px,transparent 5px);background-size:5px 1px;"></div>
<div style="position:absolute;left:918px;top:556px;width:1px;height:17px;background:#C4C4C4;"></div>
<div style="position:absolute;left:962px;top:556px;width:1px;height:17px;background:#C4C4C4;"></div>
<div style="position:absolute;left:1068px;top:556px;width:1px;height:17px;background:#C4C4C4;"></div>
<div style="position:absolute;top:559px;font-size:11px;line-height:11px;color:#000;white-space:pre;font-weight:bold;left:668px;">NVM_CHECKSUM [MFR 32]</div>
<div style="position:absolute;top:559px;font-size:11px;line-height:11px;color:#000;white-space:pre;left:925px;">0xF0</div>
<div style="position:absolute;left:969px;top:554px;width:80px;height:20px;border:1px solid #BBAFA2;background:#FFFFFF;"></div>
<div style="position:absolute;left:1032px;top:556px;width:15px;height:16px;border:1px solid #6E6E6E;border-radius:2px;background:linear-gradient(#FBFBFB,#E4E4E4);"></div>
<svg style="position:absolute;left:1032px;top:556px" width="15" height="15" viewBox="0 0 15 15"><path d="M4.2 5.6 L7.5 9.2 L10.8 5.6" stroke="#4A4A4A" stroke-width="1.25" fill="none"/></svg>
<div style="position:absolute;top:559px;font-size:11px;line-height:11px;color:#000;white-space:pre;left:970px;width:62px;text-align:center;">Checksu…</div>
<div style="position:absolute;top:560px;font-size:11px;line-height:11px;color:#000;white-space:pre;left:1079px;">0xE9E0</div>
<div style="position:absolute;left:663px;top:578px;width:478px;height:27px;background:#E7E7E7;"></div>
<div style="position:absolute;left:663px;top:604px;width:478px;height:1px;background-image:linear-gradient(90deg,#B4B4B4 0px,#B4B4B4 2px,transparent 2px,transparent 5px);background-size:5px 1px;"></div>
<div style="position:absolute;left:918px;top:583px;width:1px;height:17px;background:#C4C4C4;"></div>
<div style="position:absolute;left:962px;top:583px;width:1px;height:17px;background:#C4C4C4;"></div>
<div style="position:absolute;left:1068px;top:583px;width:1px;height:17px;background:#C4C4C4;"></div>
<div style="position:absolute;top:586px;font-size:11px;line-height:11px;color:#000;white-space:pre;font-weight:bold;left:668px;">READ_IOUT  phase ALL</div>
<div style="position:absolute;top:586px;font-size:11px;line-height:11px;color:#000;white-space:pre;left:925px;">0x8C</div>
<div style="position:absolute;top:586px;font-size:11px;line-height:11px;color:#000;white-space:pre;left:968px;width:90px;text-align:right;">-0.52 A</div>
<div style="position:absolute;top:587px;font-size:11px;line-height:11px;color:#000;white-space:pre;left:1079px;">0xB5F0</div>
<div style="position:absolute;left:663px;top:605px;width:478px;height:27px;background:#EFEFEF;"></div>
<div style="position:absolute;left:663px;top:631px;width:478px;height:1px;background-image:linear-gradient(90deg,#B4B4B4 0px,#B4B4B4 2px,transparent 2px,transparent 5px);background-size:5px 1px;"></div>
<div style="position:absolute;left:918px;top:610px;width:1px;height:17px;background:#C4C4C4;"></div>
<div style="position:absolute;left:962px;top:610px;width:1px;height:17px;background:#C4C4C4;"></div>
<div style="position:absolute;left:1068px;top:610px;width:1px;height:17px;background:#C4C4C4;"></div>
<div style="position:absolute;top:613px;font-size:11px;line-height:11px;color:#000;white-space:pre;font-weight:bold;left:668px;">READ_TEMPERATURE_1  phase ALL</div>
<div style="position:absolute;top:613px;font-size:11px;line-height:11px;color:#000;white-space:pre;left:925px;">0x8D</div>
<div style="position:absolute;top:613px;font-size:11px;line-height:11px;color:#000;white-space:pre;left:968px;width:90px;text-align:right;">23 °C</div>
<div style="position:absolute;top:614px;font-size:11px;line-height:11px;color:#000;white-space:pre;left:1079px;">0x0017</div>
<div style="position:absolute;left:663px;top:632px;width:478px;height:27px;background:#E7E7E7;"></div>
<div style="position:absolute;left:663px;top:658px;width:478px;height:1px;background-image:linear-gradient(90deg,#B4B4B4 0px,#B4B4B4 2px,transparent 2px,transparent 5px);background-size:5px 1px;"></div>
<div style="position:absolute;left:918px;top:637px;width:1px;height:17px;background:#C4C4C4;"></div>
<div style="position:absolute;left:962px;top:637px;width:1px;height:17px;background:#C4C4C4;"></div>
<div style="position:absolute;left:1068px;top:637px;width:1px;height:17px;background:#C4C4C4;"></div>
<div style="position:absolute;top:640px;font-size:11px;line-height:11px;color:#000;white-space:pre;font-weight:bold;left:668px;">READ_VIN  phase ALL</div>
<div style="position:absolute;top:640px;font-size:11px;line-height:11px;color:#000;white-space:pre;left:925px;">0x88</div>
<div style="position:absolute;top:640px;font-size:11px;line-height:11px;color:#000;white-space:pre;left:968px;width:90px;text-align:right;">3.301 V</div>
<div style="position:absolute;top:641px;font-size:11px;line-height:11px;color:#000;white-space:pre;left:1079px;">0xC34D</div>
<div style="position:absolute;left:663px;top:659px;width:478px;height:27px;background:#EFEFEF;"></div>
<div style="position:absolute;left:663px;top:685px;width:478px;height:1px;background-image:linear-gradient(90deg,#B4B4B4 0px,#B4B4B4 2px,transparent 2px,transparent 5px);background-size:5px 1px;"></div>
<div style="position:absolute;left:918px;top:664px;width:1px;height:17px;background:#C4C4C4;"></div>
<div style="position:absolute;left:962px;top:664px;width:1px;height:17px;background:#C4C4C4;"></div>
<div style="position:absolute;left:1068px;top:664px;width:1px;height:17px;background:#C4C4C4;"></div>
<div style="position:absolute;top:667px;font-size:11px;line-height:11px;color:#000;white-space:pre;font-weight:bold;left:668px;">READ_VOUT  phase ALL</div>
<div style="position:absolute;top:667px;font-size:11px;line-height:11px;color:#000;white-space:pre;left:925px;">0x8B</div>
<div style="position:absolute;top:667px;font-size:11px;line-height:11px;color:#000;white-space:pre;left:968px;width:90px;text-align:right;">0.009766 V</div>
<div style="position:absolute;top:668px;font-size:11px;line-height:11px;color:#000;white-space:pre;left:1079px;">0x0005</div>
<div style="position:absolute;left:663px;top:686px;width:478px;height:27px;background:#E7E7E7;"></div>
<div style="position:absolute;left:663px;top:712px;width:478px;height:1px;background-image:linear-gradient(90deg,#B4B4B4 0px,#B4B4B4 2px,transparent 2px,transparent 5px);background-size:5px 1px;"></div>
<div style="position:absolute;left:918px;top:691px;width:1px;height:17px;background:#C4C4C4;"></div>
<div style="position:absolute;left:962px;top:691px;width:1px;height:17px;background:#C4C4C4;"></div>
<div style="position:absolute;left:1068px;top:691px;width:1px;height:17px;background:#C4C4C4;"></div>
<div style="position:absolute;top:694px;font-size:11px;line-height:11px;color:#000;white-space:pre;font-weight:bold;left:668px;">STATUS_BYTE</div>
<div style="position:absolute;top:694px;font-size:11px;line-height:11px;color:#000;white-space:pre;left:925px;">0x78</div>
<div style="position:absolute;left:969px;top:689px;width:80px;height:20px;border:1px solid #BBAFA2;background:#FFFFFF;"></div>
<div style="position:absolute;left:1032px;top:691px;width:15px;height:16px;border:1px solid #6E6E6E;border-radius:2px;background:linear-gradient(#FBFBFB,#E4E4E4);"></div>
<svg style="position:absolute;left:1032px;top:691px" width="15" height="15" viewBox="0 0 15 15"><path d="M4.2 5.6 L7.5 9.2 L10.8 5.6" stroke="#4A4A4A" stroke-width="1.25" fill="none"/></svg>
<div style="position:absolute;top:694px;font-size:11px;line-height:11px;color:#000;white-space:pre;left:958px;width:70px;text-align:right;">01000000</div>
<div style="position:absolute;top:695px;font-size:11px;line-height:11px;color:#000;white-space:pre;left:1079px;">0x40</div>
<div style="position:absolute;left:663px;top:713px;width:478px;height:27px;background:#EFEFEF;"></div>
<div style="position:absolute;left:663px;top:739px;width:478px;height:1px;background-image:linear-gradient(90deg,#B4B4B4 0px,#B4B4B4 2px,transparent 2px,transparent 5px);background-size:5px 1px;"></div>
<div style="position:absolute;left:918px;top:718px;width:1px;height:17px;background:#C4C4C4;"></div>
<div style="position:absolute;left:962px;top:718px;width:1px;height:17px;background:#C4C4C4;"></div>
<div style="position:absolute;left:1068px;top:718px;width:1px;height:17px;background:#C4C4C4;"></div>
<div style="position:absolute;top:721px;font-size:11px;line-height:11px;color:#000;white-space:pre;font-weight:bold;left:668px;">STATUS_CML</div>
<div style="position:absolute;top:721px;font-size:11px;line-height:11px;color:#000;white-space:pre;left:925px;">0x7E</div>
<div style="position:absolute;left:969px;top:716px;width:80px;height:20px;border:1px solid #BBAFA2;background:#FFFFFF;"></div>
<div style="position:absolute;left:1032px;top:718px;width:15px;height:16px;border:1px solid #6E6E6E;border-radius:2px;background:linear-gradient(#FBFBFB,#E4E4E4);"></div>
<svg style="position:absolute;left:1032px;top:718px" width="15" height="15" viewBox="0 0 15 15"><path d="M4.2 5.6 L7.5 9.2 L10.8 5.6" stroke="#4A4A4A" stroke-width="1.25" fill="none"/></svg>
<div style="position:absolute;top:721px;font-size:11px;line-height:11px;color:#000;white-space:pre;left:958px;width:70px;text-align:right;">00000000</div>
<div style="position:absolute;top:722px;font-size:11px;line-height:11px;color:#000;white-space:pre;left:1079px;">0x00</div>
</div>
<div style="position:absolute;left:1160px;top:120px;width:17px;height:590px;background:linear-gradient(90deg,#F0F0EC,#FCFCFA 50%,#F0F0EC);"></div>
<div style="position:absolute;left:1160px;top:103px;width:17px;height:17px;border:1px solid #8A8A8A;border-radius:2px;background:linear-gradient(#FBFBFB,#E8E8E8);"></div>
<svg style="position:absolute;left:1160px;top:103px" width="17" height="17" viewBox="0 0 17 17"><path d="M4.5 10 L8.5 6 L12.5 10" stroke="#555" stroke-width="1.2" fill="none"/></svg>
<div style="position:absolute;left:1160px;top:121px;width:17px;height:273px;border:1px solid #7A7A7A;border-radius:2px;background:linear-gradient(90deg,#FAFAFA,#E6E6E6);"></div>
<div style="position:absolute;left:1165px;top:255px;width:7px;height:1px;background:#707070;"></div>
<div style="position:absolute;left:1165px;top:257px;width:7px;height:1px;background:#707070;"></div>
<div style="position:absolute;left:1165px;top:259px;width:7px;height:1px;background:#707070;"></div>
<div style="position:absolute;left:1160px;top:710px;width:17px;height:17px;border:1px solid #8A8A8A;border-radius:2px;background:linear-gradient(#FBFBFB,#E8E8E8);"></div>
<svg style="position:absolute;left:1160px;top:710px" width="17" height="17" viewBox="0 0 17 17"><path d="M4.5 7 L8.5 11 L12.5 7" stroke="#555" stroke-width="1.2" fill="none"/></svg>
<div style="position:absolute;left:172px;top:727px;width:1005px;height:17px;background:linear-gradient(#F0F0EC,#FCFCFA 50%,#F0F0EC);"></div>
<div style="position:absolute;left:172px;top:727px;width:17px;height:17px;border:1px solid #8A8A8A;border-radius:2px;background:linear-gradient(#FBFBFB,#E8E8E8);"></div>
<svg style="position:absolute;left:172px;top:727px" width="17" height="17" viewBox="0 0 17 17"><path d="M10 4.5 L6 8.5 L10 12.5" stroke="#555" stroke-width="1.2" fill="none"/></svg>
<div style="position:absolute;left:190px;top:727px;width:857px;height:17px;border:1px solid #7A7A7A;border-radius:2px;background:linear-gradient(#FAFAFA,#E6E6E6);"></div>
<div style="position:absolute;left:616px;top:732px;width:1px;height:7px;background:#707070;"></div>
<div style="position:absolute;left:618px;top:732px;width:1px;height:7px;background:#707070;"></div>
<div style="position:absolute;left:620px;top:732px;width:1px;height:7px;background:#707070;"></div>
<div style="position:absolute;left:1143px;top:727px;width:17px;height:17px;border:1px solid #8A8A8A;border-radius:2px;background:linear-gradient(#FBFBFB,#E8E8E8);"></div>
<svg style="position:absolute;left:1143px;top:727px" width="17" height="17" viewBox="0 0 17 17"><path d="M7 4.5 L11 8.5 L7 12.5" stroke="#555" stroke-width="1.2" fill="none"/></svg>
<div style="position:absolute;left:169px;top:765px;width:1012px;height:79px;border:1px solid #7F8A9C;background:#FFFFFF;"></div>
<div style="position:absolute;left:173px;top:769px;width:1004px;height:71px;border:3px solid #EFEFEF;border-right-width:2px;border-bottom-width:2px;background:#FFFFFF;"></div>
<div style="position:absolute;left:1159px;top:772px;width:17px;height:67px;background:linear-gradient(90deg,#EEEEEA,#FAFAF8 50%,#EEEEEA);"></div>
<div style="position:absolute;left:1159px;top:772px;width:17px;height:17px;border:1px solid #C4C4C4;border-radius:2px;background:linear-gradient(#FBFBFB,#E8E8E8);"></div>
<svg style="position:absolute;left:1159px;top:772px" width="17" height="17" viewBox="0 0 17 17"><path d="M4.5 10 L8.5 6 L12.5 10" stroke="#A8A8A8" stroke-width="1.2" fill="none"/></svg>
<div style="position:absolute;left:1159px;top:823px;width:17px;height:17px;border:1px solid #C4C4C4;border-radius:2px;background:linear-gradient(#FBFBFB,#E8E8E8);"></div>
<svg style="position:absolute;left:1159px;top:823px" width="17" height="17" viewBox="0 0 17 17"><path d="M4.5 7 L8.5 11 L12.5 7" stroke="#A8A8A8" stroke-width="1.2" fill="none"/></svg>
<div style="position:absolute;left:169px;top:844px;width:70px;height:21px;border:1px solid #7F8A9C;border-top:none;border-bottom:none;background:#FFFFFF;"></div>
<div style="position:absolute;top:851px;font-size:10px;line-height:10px;color:#000;white-space:pre;left:177px;letter-spacing:0.4px;">PMBus Log</div>
<svg style="position:absolute;left:1159px;top:847px" width="17" height="18" viewBox="0 0 17 18"><path d="M2.5 5 L4 15.5 Q8.5 17.5 13 15.5 L14.5 5 Z" fill="#C8C6B0" stroke="#3A3A30" stroke-width="1.1"/><path d="M5.5 8 V15 M8.5 8.5 V16 M11.5 8 V15" stroke="#7A786A" stroke-width="1.1"/><ellipse cx="8.5" cy="5" rx="6.3" ry="3" fill="#E6E4D0" stroke="#3A3A30" stroke-width="1.1"/><ellipse cx="8.5" cy="4.6" rx="1.8" ry="1" fill="#505048"/><path d="M16 2 V17 H3" stroke="#606060" stroke-width="0.8" fill="none"/></svg>
</body></html>
